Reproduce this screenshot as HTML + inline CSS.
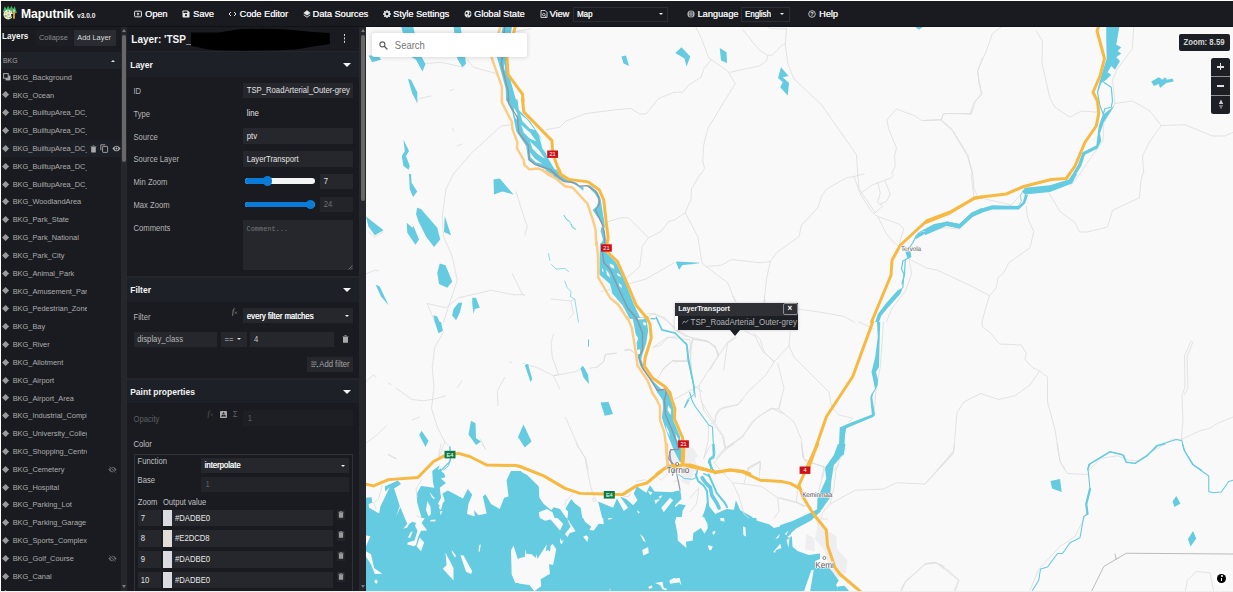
<!DOCTYPE html>
<html><head><meta charset="utf-8"><title>Maputnik</title>
<style>
*{box-sizing:border-box;margin:0;padding:0}
html,body{width:1233px;height:592px;overflow:hidden;background:#fff;font-family:"Liberation Sans",sans-serif;color:#e8e8e8}
#app{position:absolute;left:1px;top:1px;width:1232px;height:590px;background:#191b20;overflow:hidden}
.abs{position:absolute;white-space:nowrap}
/* toolbar */
#tb{position:absolute;left:0;top:0;width:1232px;height:25.8px;background:#191b20;z-index:5;border-bottom:1px solid #111216}
#tb .t{transform:scaleY(1.04);position:absolute;top:8px;font-size:9.2px;color:#ececec;text-shadow:0.25px 0 0 #ececec;line-height:11px;white-space:nowrap}
/* layer list */
#ll{position:absolute;left:0;top:25px;width:121px;height:565px;background:#191b20;overflow:hidden}
.li{transform:scaleY(1.09);position:absolute;left:11.7px;font-size:7.4px;color:#adadad;line-height:10px;white-space:nowrap;width:74.5px;overflow:hidden;margin-top:0.5px}
.dm{position:absolute;left:2px;width:6px;height:6px;background:#9a9a9a;transform:rotate(45deg)}
/* editor */
#ed{position:absolute;left:126px;top:25px;width:232.1px;height:565px;background:#191b20;overflow:hidden}
.sh{position:absolute;left:0;width:234px;height:24px;background:#1c1f24}
.sh b{position:absolute;left:5px;top:6px;font-size:9.3px;line-height:12px;color:#f0f0f0}
.sh i{position:absolute;right:10px;top:10px;width:0;height:0;border-left:4px solid transparent;border-right:4px solid transparent;border-top:5px solid #f0f0f0}
.lb{transform:scaleY(1.09);position:absolute;left:8px;font-size:8px;color:#a4a4a4;line-height:10px;white-space:nowrap}
.in{position:absolute;background:#26282e;font-size:7.9px;color:#e0e0e0;line-height:10px;white-space:nowrap;padding-left:4px}
#map{position:absolute;left:364.8px;top:25px;width:867px;height:566px;background:#faf9f9;overflow:hidden}
</style></head><body>
<div style="position:absolute;left:0;top:591px;width:1233px;height:1px;background:#efefef"></div>
<div id="app">
<div id="tb">
<svg class="abs" style="left:1px;top:3px" width="15.5" height="16.5" viewBox="0 0 14 15">
<path d="M0.5 8 L2.5 2 L4 4.5 L5.5 1.5 L7 4.5 L8.5 1.5 L10 4.5 L11.5 2 L13.5 8 L11 9 L8 6 L3 6.5 Z" fill="#3fb25f"/>
<ellipse cx="5.6" cy="9.6" rx="4.3" ry="4.4" fill="#f4f4ee"/>
<circle cx="3.3" cy="8.2" r="1" fill="#f2c94c"/><circle cx="5.6" cy="6.6" r="1" fill="#5cc46f"/><circle cx="7.9" cy="7.6" r="0.9" fill="#f2c94c"/>
<circle cx="3.3" cy="10.8" r="1" fill="#5cc46f"/><circle cx="5.2" cy="12.4" r="1" fill="#f2c94c"/><circle cx="7.3" cy="12.2" r="0.9" fill="#5cc46f"/>
<circle cx="5.8" cy="9.6" r="1.2" fill="#bdbdbd"/>
<path d="M8.2 9.2 L11 9.2 L11 11.5 L8.5 11.5 Z" fill="#191b20"/>
<rect x="10" y="7.2" width="1.7" height="6.2" fill="#d9a520"/><rect x="10" y="5" width="1.7" height="2.2" fill="#c9c9c9"/>
</svg>
<div class="abs" style="left:20px;top:4px;font-size:12.2px;font-weight:bold;color:#fff;line-height:18px;letter-spacing:-0.1px;transform:scaleY(1.09)">Maputnik</div>
<div class="abs" style="left:76px;top:10px;font-size:6.6px;font-weight:bold;color:#f0f0f0;line-height:10px;transform:scaleY(1.09)">v3.0.0</div>

<svg class="abs" style="left:133px;top:9.4px" width="8" height="8" viewBox="0 0 8 8"><rect x="0.6" y="1.2" width="6.8" height="5.6" rx="0.8" fill="none" stroke="#e6e6e6" stroke-width="1"/><path d="M4 2.6 L2.4 4.2 H3.5 V5.6 H4.5 V4.2 H5.6 Z" fill="#e6e6e6"/></svg>
<div class="t" style="left:144px">Open</div>
<svg class="abs" style="left:181px;top:9.4px" width="8" height="8" viewBox="0 0 8 8"><path d="M0.5 1.3 Q0.5 0.5 1.3 0.5 H5.8 L7.5 2.2 V6.7 Q7.5 7.5 6.7 7.5 H1.3 Q0.5 7.5 0.5 6.7 Z" fill="#e6e6e6"/><rect x="1.5" y="1.4" width="3.8" height="1.6" fill="#191b20"/><circle cx="4" cy="5.2" r="1.1" fill="#191b20"/></svg>
<div class="t" style="left:192px">Save</div>
<svg class="abs" style="left:227px;top:9.4px" width="9" height="8" viewBox="0 0 9 8"><path d="M3 2 L1 4 L3 6 M6 2 L8 4 L6 6" fill="none" stroke="#e6e6e6" stroke-width="1"/></svg>
<div class="t" style="left:238.5px">Code Editor</div>
<svg class="abs" style="left:302px;top:9.4px" width="8" height="8" viewBox="0 0 8 8"><path d="M4 0.3 L7.6 2.9 L4 5.5 L0.4 2.9 Z" fill="#e6e6e6"/><path d="M1 4.6 L4 6.8 L7 4.6 L7.6 5.1 L4 7.8 L0.4 5.1 Z" fill="#e6e6e6"/></svg>
<div class="t" style="left:311.5px">Data Sources</div>
<svg class="abs" style="left:382px;top:9.4px" width="8" height="8" viewBox="0 0 8 8"><circle cx="4" cy="4" r="2.2" fill="none" stroke="#e6e6e6" stroke-width="1.7"/><path d="M4 0 V8 M0 4 H8 M1.2 1.2 L6.8 6.8 M6.8 1.2 L1.2 6.8" stroke="#e6e6e6" stroke-width="1.3" stroke-dasharray="1.4 5.2 1.4 0"/><circle cx="4" cy="4" r="1.2" fill="#191b20"/></svg>
<div class="t" style="left:392px">Style Settings</div>
<svg class="abs" style="left:463px;top:9.4px" width="8" height="8" viewBox="0 0 8 8"><circle cx="4" cy="4" r="3.4" fill="#e6e6e6"/><path d="M2 2 L3.4 2.4 L3.8 3.6 L2.8 4.6 L1.6 4 Z M5 1.6 L6.6 3 L6.2 5 L5 5.6 L4.6 4.4 L5.4 3.2 Z M3 5.6 L4 6 L3.6 7 Z" fill="#191b20"/></svg>
<div class="t" style="left:473px">Global State</div>
<svg class="abs" style="left:539px;top:9.4px" width="8" height="8" viewBox="0 0 8 8"><path d="M1 0.4 H5 L7 2.4 V7.6 H1 Z" fill="none" stroke="#e6e6e6" stroke-width="0.9"/><circle cx="3.8" cy="4.6" r="1.3" fill="none" stroke="#e6e6e6" stroke-width="0.8"/><path d="M4.7 5.5 L6 6.8" stroke="#e6e6e6" stroke-width="0.8"/></svg>
<div class="t" style="left:548.5px">View</div>
<div class="abs" style="left:572px;top:5.5px;width:95px;height:15px;border:1px solid #2c2e34;background:#191b20"></div>
<div class="abs" style="left:576px;top:8.5px;font-size:7.9px;color:#f0f0f0;line-height:10px;text-shadow:0.3px 0 0 #f0f0f0;transform:scaleY(1.09)">Map</div>
<div class="abs" style="left:658px;top:12px;border-left:2.2px solid transparent;border-right:2.2px solid transparent;border-top:2.6px solid #f0f0f0"></div>
<svg class="abs" style="left:686px;top:9.4px" width="8" height="8" viewBox="0 0 8 8"><circle cx="4" cy="4" r="3.5" fill="#e6e6e6"/><path d="M0.5 4 H7.5 M4 0.5 V7.5 M1.3 2.2 H6.7 M1.3 5.8 H6.7" stroke="#191b20" stroke-width="0.5"/><ellipse cx="4" cy="4" rx="1.7" ry="3.4" fill="none" stroke="#191b20" stroke-width="0.5"/></svg>
<div class="t" style="left:696.5px">Language</div>
<div class="abs" style="left:739.5px;top:5.5px;width:49px;height:15px;border:1px solid #2c2e34;background:#191b20"></div>
<div class="abs" style="left:744px;top:8.5px;font-size:7.9px;color:#f0f0f0;line-height:10px;text-shadow:0.3px 0 0 #f0f0f0;transform:scaleY(1.09)">English</div>
<div class="abs" style="left:778.5px;top:12px;border-left:2.2px solid transparent;border-right:2.2px solid transparent;border-top:2.6px solid #f0f0f0"></div>
<svg class="abs" style="left:807px;top:9.4px" width="8" height="8" viewBox="0 0 8 8"><circle cx="4" cy="4" r="3.3" fill="none" stroke="#e6e6e6" stroke-width="0.8"/><text x="4" y="6" font-size="5.5" font-family="Liberation Sans" text-anchor="middle" fill="#e6e6e6" font-weight="bold">?</text></svg>
<div class="t" style="left:818px">Help</div>
</div>
<div id="ll"><div class="abs" style="left:1px;top:6px;font-size:8.2px;font-weight:bold;color:#f4f4f4;line-height:10px;transform:scaleY(1.09)">Layers</div>
<div class="abs" style="left:35px;top:4px;width:37px;height:15.5px;background:#1c1e23"></div><div class="abs" style="left:38px;top:7px;font-size:7.4px;color:#8a8b8e;line-height:10px;transform:scaleY(1.09)">Collapse</div>
<div class="abs" style="left:73px;top:4px;width:42px;height:15.5px;background:#2a2c31"></div><div class="abs" style="left:76.3px;top:7px;font-size:7.4px;color:#dcdcdc;line-height:10px;transform:scaleY(1.09)">Add Layer</div>
<div class="abs" style="left:0;top:26px;width:121px;height:17px;background:#1f2229"></div><div class="abs" style="left:2px;top:29.5px;font-size:6.9px;color:#a4a4a4;line-height:10px;transform:scaleY(1.09)">BKG</div>
<div class="abs" style="left:109.5px;top:33.5px;border-left:2px solid transparent;border-right:2px solid transparent;border-bottom:2.4px solid #e0e0e0"></div>
<div class="abs" style="left:0;top:114px;width:121px;height:17px;background:#1e2027"></div>
<svg class="abs" style="left:1.5px;top:47.4px" width="8" height="8" viewBox="0 0 8 8"><rect x="2.6" y="2.6" width="4.8" height="4.8" fill="#a9a9a9"/><rect x="0.6" y="0.6" width="4.6" height="4.6" fill="#191b20" stroke="#a9a9a9" stroke-width="1"/></svg>
<div class="li" style="top:46.2px">BKG_Background</div>
<div class="dm" style="top:66.4px;left:2.3px;width:5.2px;height:5.2px"></div>
<div class="li" style="top:64.0px">BKG_Ocean</div>
<div class="dm" style="top:84.2px;left:2.3px;width:5.2px;height:5.2px"></div>
<div class="li" style="top:81.8px">BKG_BuiltupArea_DC_1</div>
<div class="dm" style="top:102.1px;left:2.3px;width:5.2px;height:5.2px"></div>
<div class="li" style="top:99.7px">BKG_BuiltupArea_DC_2</div>
<div class="dm" style="top:119.9px;left:2.3px;width:5.2px;height:5.2px"></div>
<div class="li" style="top:117.5px">BKG_BuiltupArea_DC_3</div>
<div class="dm" style="top:137.7px;left:2.3px;width:5.2px;height:5.2px"></div>
<div class="li" style="top:135.3px">BKG_BuiltupArea_DC_4</div>
<div class="dm" style="top:155.5px;left:2.3px;width:5.2px;height:5.2px"></div>
<div class="li" style="top:153.1px">BKG_BuiltupArea_DC_5</div>
<div class="dm" style="top:173.3px;left:2.3px;width:5.2px;height:5.2px"></div>
<div class="li" style="top:170.9px">BKG_WoodlandArea</div>
<div class="dm" style="top:191.2px;left:2.3px;width:5.2px;height:5.2px"></div>
<div class="li" style="top:188.8px">BKG_Park_State</div>
<div class="dm" style="top:209.0px;left:2.3px;width:5.2px;height:5.2px"></div>
<div class="li" style="top:206.6px">BKG_Park_National</div>
<div class="dm" style="top:226.8px;left:2.3px;width:5.2px;height:5.2px"></div>
<div class="li" style="top:224.4px">BKG_Park_City</div>
<div class="dm" style="top:244.6px;left:2.3px;width:5.2px;height:5.2px"></div>
<div class="li" style="top:242.2px">BKG_Animal_Park</div>
<div class="dm" style="top:262.4px;left:2.3px;width:5.2px;height:5.2px"></div>
<div class="li" style="top:260.0px">BKG_Amusement_Park</div>
<div class="dm" style="top:280.3px;left:2.3px;width:5.2px;height:5.2px"></div>
<div class="li" style="top:277.9px">BKG_Pedestrian_Zone</div>
<div class="dm" style="top:298.1px;left:2.3px;width:5.2px;height:5.2px"></div>
<div class="li" style="top:295.7px">BKG_Bay</div>
<div class="dm" style="top:315.9px;left:2.3px;width:5.2px;height:5.2px"></div>
<div class="li" style="top:313.5px">BKG_River</div>
<div class="dm" style="top:333.7px;left:2.3px;width:5.2px;height:5.2px"></div>
<div class="li" style="top:331.3px">BKG_Allotment</div>
<div class="dm" style="top:351.5px;left:2.3px;width:5.2px;height:5.2px"></div>
<div class="li" style="top:349.1px">BKG_Airport</div>
<div class="dm" style="top:369.4px;left:2.3px;width:5.2px;height:5.2px"></div>
<div class="li" style="top:367.0px">BKG_Airport_Area</div>
<div class="dm" style="top:387.2px;left:2.3px;width:5.2px;height:5.2px"></div>
<div class="li" style="top:384.8px">BKG_Industrial_Complex</div>
<div class="dm" style="top:405.0px;left:2.3px;width:5.2px;height:5.2px"></div>
<div class="li" style="top:402.6px">BKG_University_College</div>
<div class="dm" style="top:422.8px;left:2.3px;width:5.2px;height:5.2px"></div>
<div class="li" style="top:420.4px">BKG_Shopping_Centre</div>
<div class="dm" style="top:440.6px;left:2.3px;width:5.2px;height:5.2px"></div>
<div class="li" style="top:438.2px">BKG_Cemetery</div>
<div class="dm" style="top:458.5px;left:2.3px;width:5.2px;height:5.2px"></div>
<div class="li" style="top:456.1px">BKG_Hospital</div>
<div class="dm" style="top:476.3px;left:2.3px;width:5.2px;height:5.2px"></div>
<div class="li" style="top:473.9px">BKG_Parking_Lot</div>
<div class="dm" style="top:494.1px;left:2.3px;width:5.2px;height:5.2px"></div>
<div class="li" style="top:491.7px">BKG_Parking_Garage</div>
<div class="dm" style="top:511.9px;left:2.3px;width:5.2px;height:5.2px"></div>
<div class="li" style="top:509.5px">BKG_Sports_Complex</div>
<div class="dm" style="top:529.7px;left:2.3px;width:5.2px;height:5.2px"></div>
<div class="li" style="top:527.3px">BKG_Golf_Course</div>
<div class="dm" style="top:547.6px;left:2.3px;width:5.2px;height:5.2px"></div>
<div class="li" style="top:545.2px">BKG_Canal</div>
<div class="dm" style="top:565.4px;left:2.3px;width:5.2px;height:5.2px"></div>
<div class="li" style="top:563.0px">BKG_Canal_2</div>
<svg class="abs" style="left:88.5px;top:118.7px" width="7" height="8" viewBox="0 0 7 8"><path d="M1.2 2 H5.8 V7 Q5.8 7.6 5.2 7.6 H1.8 Q1.2 7.6 1.2 7 Z M0.6 0.9 H2.4 L2.8 0.4 H4.2 L4.6 0.9 H6.4 V1.6 H0.6 Z" fill="#a9a9a9"/></svg>
<svg class="abs" style="left:98.5px;top:118.2px" width="9" height="9" viewBox="0 0 9 9"><path d="M0.8 6.2 V0.8 H5.2" fill="none" stroke="#a9a9a9" stroke-width="0.9"/><rect x="2.6" y="2.4" width="5" height="6" rx="0.6" fill="none" stroke="#a9a9a9" stroke-width="0.9"/></svg>
<svg class="abs" style="left:110.5px;top:119.2px" width="9" height="7" viewBox="0 0 9 7"><path d="M0.4 3.5 Q4.5 -2.2 8.6 3.5 Q4.5 9.2 0.4 3.5 Z" fill="#b4b4b4"/><circle cx="4.5" cy="3.5" r="1.9" fill="#1e2027"/><circle cx="4.5" cy="3.5" r="1" fill="#b4b4b4"/></svg>
<svg class="abs" style="left:106.5px;top:439.9px" width="9" height="7" viewBox="0 0 9 7"><path d="M0.4 3.5 Q4.5 -2.2 8.6 3.5 Q4.5 9.2 0.4 3.5 Z" fill="#6e6f73"/><circle cx="4.5" cy="3.5" r="1.9" fill="#191b20"/><circle cx="4.5" cy="3.5" r="1" fill="#6e6f73"/><path d="M1 0 L8 7" stroke="#191b20" stroke-width="1.6"/><path d="M1.3 0.3 L7.7 6.7" stroke="#6e6f73" stroke-width="0.7"/></svg>
<svg class="abs" style="left:106.5px;top:529.0px" width="9" height="7" viewBox="0 0 9 7"><path d="M0.4 3.5 Q4.5 -2.2 8.6 3.5 Q4.5 9.2 0.4 3.5 Z" fill="#6e6f73"/><circle cx="4.5" cy="3.5" r="1.9" fill="#191b20"/><circle cx="4.5" cy="3.5" r="1" fill="#6e6f73"/><path d="M1 0 L8 7" stroke="#191b20" stroke-width="1.6"/><path d="M1.3 0.3 L7.7 6.7" stroke="#6e6f73" stroke-width="0.7"/></svg></div>
<div class="abs" style="left:120px;top:25px;width:6.8px;height:565px;background:#25272c"></div>
<div class="abs" style="left:121px;top:33.8px;width:4px;height:127.5px;background:#686868;border-radius:2px"></div>
<div class="abs" style="left:121px;top:28px;border-left:2px solid transparent;border-right:2px solid transparent;border-bottom:3px solid #7a7a7a"></div>
<div class="abs" style="left:121px;top:584px;border-left:2px solid transparent;border-right:2px solid transparent;border-top:3px solid #7a7a7a"></div>
<div id="ed"><div class="abs" style="left:4.3px;top:7.0px;font-size:10px;font-weight:bold;color:#f4f4f4;line-height:13px;transform:scaleY(1.09)">Layer: 'TSP_</div>
<svg class="abs" style="left:59.0px;top:1.0px" width="148" height="26" viewBox="186 27 148 26"><path d="M191 32.4 L219 32.4 Q228 31 238.4 29.2 Q258 28.6 277.4 29 Q296 30 310 31.8 L329.6 33 L330 44 Q322 45.4 316 46 Q306 48 297 49.3 Q276 50.8 254 50.6 Q232 50.8 212.5 50 Q205 49 199.5 47.4 L191 46 Z" fill="#000"/></svg>
<div class="abs" style="left:216.6px;top:8.3px;width:1.8px;height:1.8px;background:#d8d8d8;box-shadow:0 3.4px 0 #d8d8d8,0 6.8px 0 #d8d8d8"></div>
<div class="abs" style="left:0;top:25.0px;width:234px;height:1px;background:#24262c"></div>
<div class="abs" style="left:0;top:26.4px;width:234px;height:24.3px;background:#1e2027"></div>
<div class="abs" style="left:3.2px;top:32.5px;font-size:8.5px;font-weight:bold;color:#f4f4f4;line-height:12px;transform:scaleY(1.09)">Layer</div>
<div class="abs" style="left:216.0px;top:36.5px;border-left:4px solid transparent;border-right:4px solid transparent;border-top:4.2px solid #f4f4f4"></div>
<div class="lb" style="left:6.5px;top:61.0px;color:#b6b6b6;font-size:7.65px">ID</div>
<div class="abs" style="left:116.3px;top:57.2px;width:109.6px;height:14.8px;background:#25272c"></div>
<div class="abs" style="left:119.8px;top:60.3px;font-size:7.7px;color:#e4e4e4;line-height:10px;;transform:scaleY(1.09)">TSP_RoadArterial_Outer-grey</div>
<div class="lb" style="left:6.5px;top:83.5px;color:#b6b6b6;font-size:7.65px">Type</div>
<div class="abs" style="left:119.8px;top:83.2px;font-size:7.7px;color:#e4e4e4;line-height:10px;transform:scaleY(1.09)">line</div>
<div class="lb" style="left:6.5px;top:106.5px;color:#b6b6b6;font-size:7.65px">Source</div>
<div class="abs" style="left:116.3px;top:102.0px;width:109.6px;height:15.5px;background:#25272c"></div>
<div class="abs" style="left:119.8px;top:105.5px;font-size:7.7px;color:#e4e4e4;line-height:10px;;transform:scaleY(1.09)">ptv</div>
<div class="lb" style="left:6.5px;top:128.7px;color:#b6b6b6;font-size:7.65px">Source Layer</div>
<div class="abs" style="left:116.3px;top:125.3px;width:109.6px;height:15.3px;background:#25272c"></div>
<div class="abs" style="left:119.8px;top:128.6px;font-size:7.7px;color:#e4e4e4;line-height:10px;;transform:scaleY(1.09)">LayerTransport</div>
<div class="lb" style="left:6.5px;top:151.7px;color:#b6b6b6;font-size:7.65px">Min Zoom</div>
<div class="abs" style="left:118.4px;top:152.2px;width:70px;height:5.6px;border-radius:3px;background:#f4f4f4"></div>
<div class="abs" style="left:118.4px;top:152.2px;width:22.1px;height:5.6px;border-radius:3px;background:#0b7bd8"></div>
<div class="abs" style="left:135.9px;top:150.4px;width:9.2px;height:9.2px;border-radius:5px;background:#0b7bd8"></div>
<div class="abs" style="left:193.2px;top:147.8px;width:32.7px;height:14.8px;background:#25272c"></div>
<div class="abs" style="left:196.7px;top:150.9px;font-size:7.7px;color:#e4e4e4;line-height:10px;;transform:scaleY(1.09)">7</div>
<div class="lb" style="left:6.5px;top:174.9px;color:#b6b6b6;font-size:7.65px">Max Zoom</div>
<div class="abs" style="left:118.4px;top:175.5px;width:70px;height:5.6px;border-radius:3px;background:#f4f4f4"></div>
<div class="abs" style="left:118.4px;top:175.5px;width:65.3px;height:5.6px;border-radius:3px;background:#0b7bd8"></div>
<div class="abs" style="left:179.1px;top:173.7px;width:9.2px;height:9.2px;border-radius:5px;background:#0b7bd8"></div>
<div class="abs" style="left:193.2px;top:170.7px;width:32.7px;height:15.0px;background:#222429"></div>
<div class="abs" style="left:196.7px;top:173.9px;font-size:7.7px;color:#6f7074;line-height:10px;;transform:scaleY(1.09)">24</div>
<div class="lb" style="left:6.5px;top:198.3px;color:#b6b6b6;font-size:7.65px">Comments</div>
<div class="abs" style="left:116.3px;top:193.7px;width:109.6px;height:50.5px;background:#25272c"></div>
<div class="abs" style="left:119.6px;top:198.3px;font-size:6.9px;color:#77787c;line-height:10px;font-family:'Liberation Mono',monospace">Comment...</div>
<svg class="abs" style="left:220.5px;top:238.8px" width="5" height="5" viewBox="0 0 5 5"><path d="M0.5 4.5 L4.5 0.5 M2.8 4.5 L4.5 2.8" stroke="#9a9a9a" stroke-width="0.6"/></svg>
<div class="abs" style="left:0;top:250.0px;width:234px;height:1.6px;background:#24262c"></div>
<div class="abs" style="left:0;top:252.0px;width:234px;height:24.0px;background:#1e2027"></div>
<div class="abs" style="left:3.2px;top:258.0px;font-size:8.5px;font-weight:bold;color:#f4f4f4;line-height:12px;transform:scaleY(1.09)">Filter</div>
<div class="abs" style="left:216.0px;top:262.0px;border-left:4px solid transparent;border-right:4px solid transparent;border-top:4.2px solid #f4f4f4"></div>
<div class="lb" style="left:6.5px;top:287.0px;color:#b6b6b6;font-size:7.65px">Filter</div>
<div class="abs" style="left:105.0px;top:281.0px;font-size:7.5px;color:#a4a4a4;line-height:10px;font-family:'Liberation Serif',serif;font-style:italic;transform:scaleY(1.09)">f<span style="font-size:6.5px;font-style:normal;position:relative;top:1px">×</span></div>
<div class="abs" style="left:116.3px;top:282.2px;width:109.6px;height:15.2px;background:#25272c"></div>
<div class="abs" style="left:119.8px;top:285.5px;font-size:7.7px;color:#f4f4f4;line-height:10px;text-shadow:0.3px 0 0 #f4f4f4;transform:scaleY(1.09)">every filter matches</div>
<div class="abs" style="left:217.6px;top:288.8px;border-left:2.2px solid transparent;border-right:2.2px solid transparent;border-top:2.6px solid #f0f0f0"></div>
<div class="abs" style="left:6.8px;top:305.5px;width:83.2px;height:15.2px;background:#25272c"></div>
<div class="abs" style="left:10.3px;top:308.8px;font-size:7.7px;color:#b8b8b8;line-height:10px;;transform:scaleY(1.09)">display_class</div>
<div class="abs" style="left:94.0px;top:305.5px;width:25.8px;height:15.2px;background:#25272c"></div>
<div class="abs" style="left:97.5px;top:308.8px;font-size:7.7px;color:#c8c8c8;line-height:10px;;transform:scaleY(1.09)">==</div>
<div class="abs" style="left:110.3px;top:312.2px;border-left:2.2px solid transparent;border-right:2.2px solid transparent;border-top:2.6px solid #e0e0e0"></div>
<div class="abs" style="left:123.4px;top:305.5px;width:83.6px;height:15.2px;background:#25272c"></div>
<div class="abs" style="left:126.9px;top:308.8px;font-size:7.7px;color:#c8c8c8;line-height:10px;;transform:scaleY(1.09)">4</div>
<svg class="abs" style="left:214.8px;top:309.2px" width="7" height="8" viewBox="0 0 7 8"><path d="M1 2.1 H6 V7.2 Q6 7.8 5.4 7.8 H1.6 Q1 7.8 1 7.2 Z M0.4 0.9 H2.3 L2.7 0.3 H4.3 L4.7 0.9 H6.6 V1.6 H0.4 Z" fill="#a9a9a9"/></svg>
<div class="abs" style="left:180.2px;top:330.9px;width:45.7px;height:15.1px;background:#25272c"></div>
<svg class="abs" style="left:184.2px;top:335.3px" width="8" height="7" viewBox="0 0 8 7"><path d="M0.3 1 H5.6 M0.3 3.2 H5.6 M0.3 5.4 H4 " stroke="#a4a4a4" stroke-width="0.8"/><path d="M5.2 5 L6.4 6.4 L7.6 5 Z" fill="#a4a4a4"/></svg>
<div class="abs" style="left:192.3px;top:334.2px;font-size:7.7px;color:#a4a4a4;line-height:10px;transform:scaleY(1.09)">Add filter</div>
<div class="abs" style="left:0;top:352.0px;width:234px;height:1.6px;background:#24262c"></div>
<div class="abs" style="left:0;top:354.2px;width:234px;height:23.3px;background:#1e2027"></div>
<div class="abs" style="left:3.2px;top:359.9px;font-size:8.5px;font-weight:bold;color:#f4f4f4;line-height:12px;transform:scaleY(1.09)">Paint properties</div>
<div class="abs" style="left:216.0px;top:363.9px;border-left:4px solid transparent;border-right:4px solid transparent;border-top:4.2px solid #f4f4f4"></div>
<div class="lb" style="left:6.5px;top:388.7px;color:#5e5f63;font-size:7.65px">Opacity</div>
<div class="abs" style="left:116.3px;top:384.4px;width:109.6px;height:15.2px;background:#1d1f24"></div>
<div class="abs" style="left:120.8px;top:387.7px;font-size:7.7px;color:#5e5f63;line-height:10px;;transform:scaleY(1.09)">1</div>
<div class="abs" style="left:80.6px;top:383.0px;font-size:7.5px;color:#5e5f63;line-height:10px;font-family:'Liberation Serif',serif;font-style:italic;transform:scaleY(1.09)">f<span style="font-size:6.5px;font-style:normal;position:relative;top:1px">×</span></div>
<svg class="abs" style="left:93.0px;top:385.4px" width="7" height="7" viewBox="0 0 7 7"><rect x="0" y="0" width="7" height="7" rx="0.8" fill="#a8a8a8"/><path d="M0.8 5.6 L2.6 3.4 L3.8 4.6 L4.8 3.6 L6.2 5.6 Z" fill="#191b20"/><path d="M3.5 1 V3.2 M2.5 2.3 L3.5 3.3 L4.5 2.3" stroke="#191b20" stroke-width="0.7" fill="none"/></svg>
<div class="abs" style="left:105.8px;top:383.7px;font-size:8px;color:#5e5f63;line-height:10px;transform:scaleY(1.09)">Σ</div>
<div class="lb" style="left:6.5px;top:413.6px;color:#c0c0c0;font-size:7.65px">Color</div>
<div class="abs" style="left:7.0px;top:428.2px;width:219.3px;height:160px;border:1px solid #303237"></div>
<div class="lb" style="left:10.6px;top:431.2px;color:#c0c0c0;font-size:7.65px">Function</div>
<div class="abs" style="left:74.1px;top:432.0px;width:148.1px;height:15.3px;background:#25272c"></div>
<div class="abs" style="left:77.6px;top:435.3px;font-size:7.7px;color:#f4f4f4;line-height:10px;text-shadow:0.3px 0 0 #f4f4f4;transform:scaleY(1.09)">interpolate</div>
<div class="abs" style="left:213.5px;top:438.8px;border-left:2.2px solid transparent;border-right:2.2px solid transparent;border-top:2.6px solid #f0f0f0"></div>
<div class="lb" style="left:10.6px;top:450.0px;color:#c0c0c0;font-size:7.65px">Base</div>
<div class="abs" style="left:74.1px;top:450.8px;width:148.1px;height:15.2px;background:#222429"></div>
<div class="abs" style="left:78.6px;top:454.1px;font-size:7.7px;color:#5e5f63;line-height:10px;;transform:scaleY(1.09)">1</div>
<div class="lb" style="left:10.8px;top:471.7px;color:#c0c0c0;font-size:7.65px">Zoom</div>
<div class="lb" style="left:35.9px;top:471.7px;color:#c0c0c0;font-size:7.65px">Output value</div>
<div class="abs" style="left:11.0px;top:483.8px;width:22.8px;height:16.5px;background:#25272c"></div>
<div class="abs" style="left:13.8px;top:487.7px;font-size:7.7px;color:#e0e0e0;line-height:10px;;transform:scaleY(1.09)">7</div>
<div class="abs" style="left:35.7px;top:483.8px;width:170.3px;height:16.5px;background:#25272c"></div>
<div class="abs" style="left:48.0px;top:487.7px;font-size:7.7px;color:#e8e8e8;line-height:10px;;transform:scaleY(1.09)">#DADBE0</div>
<div class="abs" style="left:35.7px;top:483.8px;width:9.4px;height:16.5px;background:#dadbe0"></div>
<div class="abs" style="left:210.0px;top:484.0px;width:7.6px;height:10.2px;background:#222429"></div>
<svg class="abs" style="left:211.0px;top:484.8px" width="6" height="7" viewBox="0 0 7 8"><path d="M1 2.1 H6 V7.2 Q6 7.8 5.4 7.8 H1.6 Q1 7.8 1 7.2 Z M0.4 0.9 H2.3 L2.7 0.3 H4.3 L4.7 0.9 H6.6 V1.6 H0.4 Z" fill="#9a9a9a"/></svg>
<div class="abs" style="left:11.0px;top:504.4px;width:22.8px;height:16.5px;background:#25272c"></div>
<div class="abs" style="left:13.8px;top:508.3px;font-size:7.7px;color:#e0e0e0;line-height:10px;;transform:scaleY(1.09)">8</div>
<div class="abs" style="left:35.7px;top:504.4px;width:170.3px;height:16.5px;background:#25272c"></div>
<div class="abs" style="left:48.0px;top:508.3px;font-size:7.7px;color:#e8e8e8;line-height:10px;;transform:scaleY(1.09)">#E2DCD8</div>
<div class="abs" style="left:35.7px;top:504.4px;width:9.4px;height:16.5px;background:#e2dcd8"></div>
<div class="abs" style="left:210.0px;top:504.6px;width:7.6px;height:10.2px;background:#222429"></div>
<svg class="abs" style="left:211.0px;top:505.4px" width="6" height="7" viewBox="0 0 7 8"><path d="M1 2.1 H6 V7.2 Q6 7.8 5.4 7.8 H1.6 Q1 7.8 1 7.2 Z M0.4 0.9 H2.3 L2.7 0.3 H4.3 L4.7 0.9 H6.6 V1.6 H0.4 Z" fill="#9a9a9a"/></svg>
<div class="abs" style="left:11.0px;top:525.0px;width:22.8px;height:16.5px;background:#25272c"></div>
<div class="abs" style="left:13.8px;top:528.9px;font-size:7.7px;color:#e0e0e0;line-height:10px;;transform:scaleY(1.09)">9</div>
<div class="abs" style="left:35.7px;top:525.0px;width:170.3px;height:16.5px;background:#25272c"></div>
<div class="abs" style="left:48.0px;top:528.9px;font-size:7.7px;color:#e8e8e8;line-height:10px;;transform:scaleY(1.09)">#DADBE0</div>
<div class="abs" style="left:35.7px;top:525.0px;width:9.4px;height:16.5px;background:#dadbe0"></div>
<div class="abs" style="left:210.0px;top:525.2px;width:7.6px;height:10.2px;background:#222429"></div>
<svg class="abs" style="left:211.0px;top:526.0px" width="6" height="7" viewBox="0 0 7 8"><path d="M1 2.1 H6 V7.2 Q6 7.8 5.4 7.8 H1.6 Q1 7.8 1 7.2 Z M0.4 0.9 H2.3 L2.7 0.3 H4.3 L4.7 0.9 H6.6 V1.6 H0.4 Z" fill="#9a9a9a"/></svg>
<div class="abs" style="left:11.0px;top:545.6px;width:22.8px;height:16.5px;background:#25272c"></div>
<div class="abs" style="left:13.8px;top:549.6px;font-size:7.7px;color:#e0e0e0;line-height:10px;;transform:scaleY(1.09)">10</div>
<div class="abs" style="left:35.7px;top:545.6px;width:170.3px;height:16.5px;background:#25272c"></div>
<div class="abs" style="left:48.0px;top:549.6px;font-size:7.7px;color:#e8e8e8;line-height:10px;;transform:scaleY(1.09)">#DADBE0</div>
<div class="abs" style="left:35.7px;top:545.6px;width:9.4px;height:16.5px;background:#dadbe0"></div>
<div class="abs" style="left:210.0px;top:545.8px;width:7.6px;height:10.2px;background:#222429"></div>
<svg class="abs" style="left:211.0px;top:546.6px" width="6" height="7" viewBox="0 0 7 8"><path d="M1 2.1 H6 V7.2 Q6 7.8 5.4 7.8 H1.6 Q1 7.8 1 7.2 Z M0.4 0.9 H2.3 L2.7 0.3 H4.3 L4.7 0.9 H6.6 V1.6 H0.4 Z" fill="#9a9a9a"/></svg></div>
<div class="abs" style="left:358.1px;top:25px;width:6.7px;height:565px;background:#25272c"></div>
<div class="abs" style="left:359.8px;top:34px;width:4.1px;height:166px;background:#686868;border-radius:2px"></div>
<div class="abs" style="left:359.8px;top:28px;border-left:2.05px solid transparent;border-right:2.05px solid transparent;border-bottom:3px solid #7a7a7a"></div>
<div class="abs" style="left:359.8px;top:584px;border-left:2.05px solid transparent;border-right:2.05px solid transparent;border-top:3px solid #7a7a7a"></div>
<div id="map"><svg width="867" height="566" viewBox="366 26 867 566" style="position:absolute;left:0;top:0" font-family="Liberation Sans, sans-serif"><g transform="translate(366,444) scale(0.125)"><polygon points="0,430 45,425 50,470 20,480 25,510 105,555 115,500 190,345 155,380 150,340 255,292 280,320 225,355 270,495 240,580 275,505 310,592 310,600 -8,600 -8,430" fill="#64cbe0"/><polygon points="445,600 445,592 430,540 410,470 405,400 440,335 545,350 535,300 530,215 590,170 575,210 598,195 605,222 625,235 635,265 598,275 640,312 590,350 600,430 575,480 590,490 582,510 600,530 615,470 630,455 612,395 655,372 775,435 815,360 850,405 820,475 808,560 870,580 865,530 900,570 965,555 935,420 955,402 1000,480 1070,520 1105,430 1140,420 1125,290 1160,215 1232,215 1240,215 1240,600" fill="#64cbe0"/><polygon points="510,385 550,435 543,442 520,415" fill="#faf9f9"/><polygon points="490,455 515,500 520,560 500,580 480,530" fill="#faf9f9"/><polygon points="590,540 612,535 598,570" fill="#faf9f9"/></g><g transform="translate(520,444) scale(0.125)"><polygon points="-8,215 0,215 60,250 150,340 155,430 190,480 250,530 270,505 320,520 375,600 -8,600" fill="#64cbe0"/><polygon points="150,545 215,520 260,545 280,600 160,600" fill="#faf9f9"/><polygon points="370,505 410,440 440,475 485,510 500,600 380,600 385,540 365,520" fill="#64cbe0"/><polygon points="625,460 745,510 775,435 830,535 865,510 800,420 850,440 905,490 940,450 910,395 935,340 1010,390 1040,330 1075,380 1232,385 1240,385 1240,600 660,600" fill="#64cbe0"/><polygon points="1020,375 1060,385 1045,410" fill="#faf9f9"/><polygon points="1110,420 1140,410 1120,440" fill="#faf9f9"/><polygon points="1075,450 1120,440 1085,480" fill="#faf9f9"/><polygon points="1130,510 1200,430 1225,450 1150,545" fill="#faf9f9"/><polygon points="935,530 960,545 945,555" fill="#faf9f9"/></g><g transform="translate(674,444) scale(0.125)"><polygon points="-8,385 0,380 50,370 60,440 0,500 -8,500" fill="#64cbe0"/><polygon points="-8,515 0,515 40,480 95,490 70,530 60,600 -8,600" fill="#64cbe0"/><polygon points="220,600 250,520 260,470 330,560 420,520 480,525 495,450 530,530 620,580 640,600" fill="#64cbe0"/><polygon points="305,0 325,0 322,100 290,125 300,160 310,200 290,200 275,130 310,95" fill="#64cbe0"/></g><rect x="366" y="518" width="484" height="80" fill="#64cbe0"/><g transform="translate(366,518) scale(0.125)"><polygon points="0,140 35,145 0,225" fill="#faf9f9"/><polygon points="0,265 40,290 65,400 130,445 70,448 40,370 0,310" fill="#faf9f9"/><polygon points="80,490 95,508 82,528 65,508" fill="#faf9f9"/><polygon points="310,0 470,0 445,40 400,40 372,30 345,48 330,75 298,85 330,45" fill="#faf9f9"/><polygon points="400,38 445,40 490,100 440,102 418,150 400,215 382,226 330,212 333,195 388,180 412,102 392,62" fill="#faf9f9"/><polygon points="430,155 465,195 440,265 405,225" fill="#faf9f9"/><polygon points="355,115 375,105 352,160 336,155" fill="#faf9f9"/><polygon points="515,15 555,12 557,25 515,27" fill="#faf9f9"/><polygon points="635,275 700,400 700,500 615,405 645,375" fill="#faf9f9"/><polygon points="685,255 720,300 712,318 690,280" fill="#faf9f9"/><polygon points="755,295 780,300 850,425 840,448 800,430" fill="#faf9f9"/><polygon points="905,215 918,212 910,270 900,265" fill="#faf9f9"/><polygon points="1180,220 1215,330 1232,320 1240,320 1240,520 1195,520 1165,450 1160,260" fill="#faf9f9"/></g><g transform="translate(520,518) scale(0.125)"><polygon points="160,0 200,22 245,12 320,100 345,45 300,0" fill="#faf9f9"/><polygon points="375,0 445,105 395,122 382,152 358,130 405,70 385,25" fill="#faf9f9"/><polygon points="505,0 665,0 670,50 630,45 590,100 555,95 570,70 520,30" fill="#faf9f9"/><polygon points="705,0 745,0 710,15" fill="#faf9f9"/><polygon points="320,160 335,185 350,170 335,210 322,200" fill="#faf9f9"/><polygon points="505,150 530,138 548,155 538,192" fill="#faf9f9"/><polygon points="-8,320 0,320 40,310 42,245 50,285 95,290 125,320 130,290 140,325 215,210 205,265 225,255 240,270 245,220 262,208 290,250 265,375 232,370 240,445 165,490 170,545 115,585 75,535 0,525 -8,525" fill="#faf9f9"/><polygon points="960,128 985,150 1008,195 985,180" fill="#faf9f9"/><polygon points="978,255 1025,232 1030,280 985,300" fill="#faf9f9"/><polygon points="1080,520 1140,510 1150,560 1175,565 1170,580 1140,570 1120,535" fill="#faf9f9"/><polygon points="1025,550 1055,540 1060,555 1035,568" fill="#faf9f9"/><polygon points="1195,500 1232,480 1240,480 1240,520 1200,525" fill="#faf9f9"/><polygon points="712,572 720,565 728,580" fill="#faf9f9"/></g><g transform="translate(674,518) scale(0.125)"><polygon points="8,28 20,-8 240,-8 268,48 270,80 245,125 215,80 155,120 150,180 95,190 100,240 30,180 28,128" fill="#faf9f9"/><polygon points="-8,485 0,485 45,478 60,540 45,515 0,520 -8,520" fill="#faf9f9"/><polygon points="370,0 400,0 405,30 372,22" fill="#faf9f9"/><polygon points="305,115 325,100 332,115 315,135" fill="#faf9f9"/><polygon points="272,218 310,225 298,258 280,255" fill="#faf9f9"/><polygon points="552,68 572,75 575,150 555,135" fill="#faf9f9"/><polygon points="660,-5 660,20 760,50 800,80 1010,25 1095,0 1095,-5" fill="#faf9f9"/><polygon points="810,165 850,125 835,160" fill="#faf9f9"/><polygon points="795,270 850,205 860,240 815,255 808,280" fill="#faf9f9"/><polygon points="885,130 915,100 900,135" fill="#faf9f9"/><polygon points="905,150 985,95 925,160" fill="#faf9f9"/><polygon points="900,175 925,160 915,235" fill="#faf9f9"/></g><polygon points="813.75,517 811.9,519.9 796.25,528.6 791,533 792,538 792.5,546.75 797.5,551 808.75,555 820,553.6 820,559 815,561 815,568 831.9,568 833.75,573.6 838.75,580.5 836,585 838,588 834,600 1300,600 1300,517" fill="#faf9f9"/><polygon points="803.75,592 811.25,570.5 813.75,569.5 810,592" fill="#faf9f9"/><polygon points="838,586.5 844.5,585.8 849.5,591.5 847.5,597 840,596.5 837,591" fill="#64cbe0"/><polygon points="838,444 845.5,444 843.75,454 833.75,465.25 831.25,481.5 830,497.75 821.25,510.25 817,511.5 817.5,497.75 826.25,479 825,467.75 833.75,455.25" fill="#64cbe0"/><polygon points="817,509.5 821.25,511 812,519.5 805,520 795,525.25 780,530.25 780,525.25 792.5,521 805,515.25" fill="#64cbe0"/><g transform="translate(630,400) scale(0.125)"><polygon points="440,380 500,380 545,450 520,470 540,560 470,600 440,600 430,500" fill="#eeeef0"/><polygon points="330,410 380,410 400,480 360,520 320,470" fill="#eeeef0"/></g><g transform="translate(674,444) scale(0.125)"><polygon points="60,20 120,20 170,90 150,150 60,150" fill="#eeeef0"/><polygon points="60,190 160,200 150,260 120,330 60,300" fill="#eeeef0"/></g><g transform="translate(780,444) scale(0.25)"><polygon points="140,290 165,300 180,340 225,370 228,420 270,465 265,510 235,540 200,500 175,420 140,380 150,330" fill="#eeeef0"/><polygon points="105,360 135,375 140,430 100,420" fill="#eeeef0"/></g><g transform="translate(366,26) scale(0.25)"><polyline points="200,310 215,290 260,280" fill="none" stroke="#dfdede" stroke-width="3.4" stroke-linejoin="round" stroke-linecap="round" /><polyline points="240,150 300,145 390,165 400,150" fill="none" stroke="#dfdede" stroke-width="3.4" stroke-linejoin="round" stroke-linecap="round" /><polyline points="400,130 430,165 520,190" fill="none" stroke="#dfdede" stroke-width="3.4" stroke-linejoin="round" stroke-linecap="round" /><polyline points="350,592 420,510 540,400 585,395" fill="none" stroke="#dfdede" stroke-width="3.4" stroke-linejoin="round" stroke-linecap="round" /><polyline points="590,25 660,10" fill="none" stroke="#dfdede" stroke-width="3.4" stroke-linejoin="round" stroke-linecap="round" /><polyline points="720,415 775,405 800,380 880,350 1000,335 1060,330 1095,352 1120,352 1170,290 1232,265" fill="none" stroke="#dfdede" stroke-width="3.4" stroke-linejoin="round" stroke-linecap="round" /><polyline points="335,258 352,253" fill="none" stroke="#dfdede" stroke-width="3.4" stroke-linejoin="round" stroke-linecap="round" /><polyline points="345,408 353,420" fill="none" stroke="#dfdede" stroke-width="3.4" stroke-linejoin="round" stroke-linecap="round" /><polyline points="365,480 385,472" fill="none" stroke="#dfdede" stroke-width="3.4" stroke-linejoin="round" stroke-linecap="round" /></g><g transform="translate(674,26) scale(0.25)"><polyline points="85,0 110,50 140,130 150,135 215,180 245,230 135,410 118,480 115,540 122,570 108,592" fill="none" stroke="#dfdede" stroke-width="3.4" stroke-linejoin="round" stroke-linecap="round" /><polyline points="150,135 120,170 108,205 60,235 35,265 0,265" fill="none" stroke="#dfdede" stroke-width="3.4" stroke-linejoin="round" stroke-linecap="round" /><polyline points="225,185 340,160 370,140 375,118 395,115 430,78 445,72 450,10" fill="none" stroke="#dfdede" stroke-width="3.4" stroke-linejoin="round" stroke-linecap="round" /><polyline points="275,15 340,95 375,118" fill="none" stroke="#dfdede" stroke-width="3.4" stroke-linejoin="round" stroke-linecap="round" /><polyline points="370,0 385,10 450,12" fill="none" stroke="#dfdede" stroke-width="3.4" stroke-linejoin="round" stroke-linecap="round" /><polyline points="445,72 455,150 480,212 590,315 730,515 735,592" fill="none" stroke="#dfdede" stroke-width="3.4" stroke-linejoin="round" stroke-linecap="round" /><polyline points="890,332 852,375 858,410 890,488 882,520 885,560 870,592" fill="none" stroke="#dfdede" stroke-width="3.4" stroke-linejoin="round" stroke-linecap="round" /><polyline points="890,332 965,360 990,378 1070,375 1075,355 1090,350 1155,350 1190,352 1205,300 1232,275" fill="none" stroke="#dfdede" stroke-width="3.4" stroke-linejoin="round" stroke-linecap="round" /><polyline points="1070,378 1110,410 1175,515 1195,592" fill="none" stroke="#dfdede" stroke-width="3.4" stroke-linejoin="round" stroke-linecap="round" /><polyline points="1232,130 1215,180 1220,230 1232,270" fill="none" stroke="#dfdede" stroke-width="3.4" stroke-linejoin="round" stroke-linecap="round" /></g><g transform="translate(925,26) scale(0.25)"><polyline points="310,0 270,30 245,100 210,180 225,270 195,310 180,352 75,350 65,375 0,378" fill="none" stroke="#dfdede" stroke-width="3.4" stroke-linejoin="round" stroke-linecap="round" /><polyline points="65,378 110,420 170,520 190,592" fill="none" stroke="#dfdede" stroke-width="3.4" stroke-linejoin="round" stroke-linecap="round" /><polyline points="445,20 470,60 468,150 500,290 520,325 580,365 625,340 690,345" fill="none" stroke="#dfdede" stroke-width="3.4" stroke-linejoin="round" stroke-linecap="round" /><polyline points="835,0 830,90 770,170 750,215 760,310 830,300 900,340 945,398 1040,395 1150,440 1200,440 1232,425" fill="none" stroke="#dfdede" stroke-width="3.4" stroke-linejoin="round" stroke-linecap="round" /><polyline points="945,398 900,460 870,520 875,592" fill="none" stroke="#dfdede" stroke-width="3.4" stroke-linejoin="round" stroke-linecap="round" /><polyline points="760,310 715,390 712,460 640,560 620,592" fill="none" stroke="#dfdede" stroke-width="3.4" stroke-linejoin="round" stroke-linecap="round" /></g><g transform="translate(366,174) scale(0.25)"><polyline points="350,0 320,60 305,170 310,250 345,330 365,425 340,500 310,592" fill="none" stroke="#dfdede" stroke-width="3.4" stroke-linejoin="round" stroke-linecap="round" /><polyline points="600,72 625,150 645,210 635,245" fill="none" stroke="#dfdede" stroke-width="3.4" stroke-linejoin="round" stroke-linecap="round" /><polyline points="585,398 625,480 635,485" fill="none" stroke="#dfdede" stroke-width="3.4" stroke-linejoin="round" stroke-linecap="round" /><polyline points="385,492 500,465 590,483 635,483" fill="none" stroke="#dfdede" stroke-width="3.4" stroke-linejoin="round" stroke-linecap="round" /><polyline points="245,518 320,535 370,495 385,492" fill="none" stroke="#dfdede" stroke-width="3.4" stroke-linejoin="round" stroke-linecap="round" /><polyline points="245,518 275,592" fill="none" stroke="#dfdede" stroke-width="3.4" stroke-linejoin="round" stroke-linecap="round" /><polyline points="740,500 820,508 835,500" fill="none" stroke="#dfdede" stroke-width="3.4" stroke-linejoin="round" stroke-linecap="round" /><polyline points="820,510 830,560 810,580" fill="none" stroke="#dfdede" stroke-width="3.4" stroke-linejoin="round" stroke-linecap="round" /><polyline points="0,400 35,385 48,387" fill="none" stroke="#dfdede" stroke-width="3.4" stroke-linejoin="round" stroke-linecap="round" /><polyline points="10,232 35,252 68,232" fill="none" stroke="#dfdede" stroke-width="3.4" stroke-linejoin="round" stroke-linecap="round" /><polyline points="970,190 1020,175 1050,175 1130,255 1180,230 1210,190 1232,185" fill="none" stroke="#dfdede" stroke-width="3.4" stroke-linejoin="round" stroke-linecap="round" /><polyline points="1130,255 1105,290 1095,370 1050,410 1040,420" fill="none" stroke="#dfdede" stroke-width="3.4" stroke-linejoin="round" stroke-linecap="round" /><polyline points="1050,440 1120,420 1232,355" fill="none" stroke="#dfdede" stroke-width="3.4" stroke-linejoin="round" stroke-linecap="round" /><polyline points="1130,570 1150,560 1195,575" fill="none" stroke="#dfdede" stroke-width="3.4" stroke-linejoin="round" stroke-linecap="round" /><polyline points="940,470 985,460" fill="none" stroke="#dfdede" stroke-width="3.4" stroke-linejoin="round" stroke-linecap="round" /></g><g transform="translate(674,174) scale(0.25)"><polyline points="105,0 70,60 68,100 45,155 0,185" fill="none" stroke="#dfdede" stroke-width="3.4" stroke-linejoin="round" stroke-linecap="round" /><polyline points="45,155 95,250 112,355 128,370 190,365 230,342 345,355 385,350" fill="none" stroke="#dfdede" stroke-width="3.4" stroke-linejoin="round" stroke-linecap="round" /><polyline points="128,370 215,435 245,510" fill="none" stroke="#dfdede" stroke-width="3.4" stroke-linejoin="round" stroke-linecap="round" /><polyline points="385,350 370,420 360,515" fill="none" stroke="#dfdede" stroke-width="3.4" stroke-linejoin="round" stroke-linecap="round" /><polyline points="385,350 410,315 500,250 510,205 575,135 590,90 610,60 690,15 720,10" fill="none" stroke="#dfdede" stroke-width="3.4" stroke-linejoin="round" stroke-linecap="round" /><polyline points="720,10 745,80 790,150 815,170 900,200 920,220 905,265 900,290" fill="none" stroke="#dfdede" stroke-width="3.4" stroke-linejoin="round" stroke-linecap="round" /><polyline points="720,10 760,0" fill="none" stroke="#dfdede" stroke-width="3.4" stroke-linejoin="round" stroke-linecap="round" /><polyline points="735,0 740,60 750,75 805,155" fill="none" stroke="#dfdede" stroke-width="3.4" stroke-linejoin="round" stroke-linecap="round" /><polyline points="750,75 790,45 870,15 880,0" fill="none" stroke="#dfdede" stroke-width="3.4" stroke-linejoin="round" stroke-linecap="round" /><polyline points="815,35 825,75 815,115 835,128 805,155" fill="none" stroke="#dfdede" stroke-width="3.4" stroke-linejoin="round" stroke-linecap="round" /><polyline points="845,30 865,80 850,110 825,120" fill="none" stroke="#dfdede" stroke-width="3.4" stroke-linejoin="round" stroke-linecap="round" /><polyline points="815,170 850,240 880,275 900,290" fill="none" stroke="#dfdede" stroke-width="3.4" stroke-linejoin="round" stroke-linecap="round" /><polyline points="1195,0 1200,60 1215,90" fill="none" stroke="#dfdede" stroke-width="3.4" stroke-linejoin="round" stroke-linecap="round" /><polyline points="940,340 1004,372" fill="none" stroke="#dfdede" stroke-width="3.4" stroke-linejoin="round" stroke-linecap="round" /><polyline points="940,340 950,400 925,470 870,540 850,592" fill="none" stroke="#dfdede" stroke-width="3.4" stroke-linejoin="round" stroke-linecap="round" /><polyline points="495,540 600,555 680,570 720,592" fill="none" stroke="#dfdede" stroke-width="3.4" stroke-linejoin="round" stroke-linecap="round" /></g><g transform="translate(925,174) scale(0.25)"><polyline points="185,0 195,90" fill="none" stroke="#dfdede" stroke-width="3.4" stroke-linejoin="round" stroke-linecap="round" /><polyline points="195,90 330,120 345,125 385,80" fill="none" stroke="#dfdede" stroke-width="3.4" stroke-linejoin="round" stroke-linecap="round" /><polyline points="405,130 410,175 435,230 420,295 335,355 315,395 292,415 285,455 258,487 240,545 228,592" fill="none" stroke="#dfdede" stroke-width="3.4" stroke-linejoin="round" stroke-linecap="round" /><polyline points="0,375 50,385 190,450 258,487" fill="none" stroke="#dfdede" stroke-width="3.4" stroke-linejoin="round" stroke-linecap="round" /><polyline points="495,75 540,150 600,195 618,232 650,232 730,212 750,145 858,95 862,40 870,0" fill="none" stroke="#dfdede" stroke-width="3.4" stroke-linejoin="round" stroke-linecap="round" /><polyline points="0,230 80,215 140,220" fill="none" stroke="#dfdede" stroke-width="3.4" stroke-linejoin="round" stroke-linecap="round" /><polyline points="580,50 620,0" fill="none" stroke="#dfdede" stroke-width="3.4" stroke-linejoin="round" stroke-linecap="round" /></g><g transform="translate(366,322) scale(0.25)"><polyline points="310,40 275,100 265,180 272,260 262,345 285,420 315,480 335,500" fill="none" stroke="#dfdede" stroke-width="3.4" stroke-linejoin="round" stroke-linecap="round" /><polyline points="120,265 185,310 230,315 275,308 318,295" fill="none" stroke="#dfdede" stroke-width="3.4" stroke-linejoin="round" stroke-linecap="round" /><polyline points="0,238 30,212 40,222" fill="none" stroke="#dfdede" stroke-width="3.4" stroke-linejoin="round" stroke-linecap="round" /><polyline points="90,245 100,250" fill="none" stroke="#dfdede" stroke-width="3.4" stroke-linejoin="round" stroke-linecap="round" /><polyline points="365,262 385,235" fill="none" stroke="#dfdede" stroke-width="3.4" stroke-linejoin="round" stroke-linecap="round" /><polyline points="0,485 45,450 82,415" fill="none" stroke="#dfdede" stroke-width="3.4" stroke-linejoin="round" stroke-linecap="round" /><polyline points="185,392 215,380" fill="none" stroke="#dfdede" stroke-width="3.4" stroke-linejoin="round" stroke-linecap="round" /><polyline points="88,530 120,548" fill="none" stroke="#dfdede" stroke-width="3.4" stroke-linejoin="round" stroke-linecap="round" /><polyline points="555,222 525,275 528,335" fill="none" stroke="#dfdede" stroke-width="3.4" stroke-linejoin="round" stroke-linecap="round" /><polyline points="575,160 582,162" fill="none" stroke="#dfdede" stroke-width="3.4" stroke-linejoin="round" stroke-linecap="round" /><polyline points="628,165 690,185 750,215 840,198 860,185" fill="none" stroke="#dfdede" stroke-width="3.4" stroke-linejoin="round" stroke-linecap="round" /><polyline points="750,50 740,85 745,140 770,210 750,215 775,268" fill="none" stroke="#dfdede" stroke-width="3.4" stroke-linejoin="round" stroke-linecap="round" /><polyline points="895,185 925,180 952,155 958,130 1000,125" fill="none" stroke="#dfdede" stroke-width="3.4" stroke-linejoin="round" stroke-linecap="round" /><polyline points="1035,112 1060,110 1080,130" fill="none" stroke="#dfdede" stroke-width="3.4" stroke-linejoin="round" stroke-linecap="round" /><polyline points="798,382 850,500 880,548 888,592" fill="none" stroke="#dfdede" stroke-width="3.4" stroke-linejoin="round" stroke-linecap="round" /><polyline points="458,470 478,508" fill="none" stroke="#dfdede" stroke-width="3.4" stroke-linejoin="round" stroke-linecap="round" /><polyline points="315,480 290,545" fill="none" stroke="#dfdede" stroke-width="3.4" stroke-linejoin="round" stroke-linecap="round" /></g><g transform="translate(630,400) scale(0.125)"><polyline points="570,0 590,80 660,180 740,290 760,390 690,470" fill="none" stroke="#dfdede" stroke-width="6.8" stroke-linejoin="round" stroke-linecap="round" /><polyline points="900,0 860,40 740,60 690,120 680,170 650,190" fill="none" stroke="#dfdede" stroke-width="6.8" stroke-linejoin="round" stroke-linecap="round" /><polyline points="1232,110 1140,70 1060,110 970,180 900,300 760,390" fill="none" stroke="#dfdede" stroke-width="6.8" stroke-linejoin="round" stroke-linecap="round" /><polyline points="630,200 625,330 590,470" fill="none" stroke="#dfdede" stroke-width="6.8" stroke-linejoin="round" stroke-linecap="round" /><polyline points="1040,490 950,540 940,592" fill="none" stroke="#dfdede" stroke-width="6.8" stroke-linejoin="round" stroke-linecap="round" /><polyline points="1190,70 1210,0" fill="none" stroke="#dfdede" stroke-width="6.8" stroke-linejoin="round" stroke-linecap="round" /></g><g transform="translate(620,296) scale(0.125)"><polyline points="215,140 280,140 380,200 440,270 520,320 700,360 760,400 790,470 720,592" fill="none" stroke="#dfdede" stroke-width="6.8" stroke-linejoin="round" stroke-linecap="round" /><polyline points="900,0 930,50" fill="none" stroke="#dfdede" stroke-width="6.8" stroke-linejoin="round" stroke-linecap="round" /><polyline points="1155,0 1160,50" fill="none" stroke="#dfdede" stroke-width="6.8" stroke-linejoin="round" stroke-linecap="round" /><polyline points="830,592 860,380 930,330" fill="none" stroke="#dfdede" stroke-width="6.8" stroke-linejoin="round" stroke-linecap="round" /><polyline points="1000,280 1080,320 1140,440 1232,520" fill="none" stroke="#dfdede" stroke-width="6.8" stroke-linejoin="round" stroke-linecap="round" /><polyline points="280,400 380,330 560,350 570,592" fill="none" stroke="#dfdede" stroke-width="6.8" stroke-linejoin="round" stroke-linecap="round" /><polyline points="340,592 420,520 540,520" fill="none" stroke="#dfdede" stroke-width="6.8" stroke-linejoin="round" stroke-linecap="round" /><polyline points="40,435 80,430 110,450" fill="none" stroke="#dfdede" stroke-width="6.8" stroke-linejoin="round" stroke-linecap="round" /></g><g transform="translate(674,322) scale(0.25)"><polyline points="0,160 50,155 75,70 130,75 165,100 178,135" fill="none" stroke="#dfdede" stroke-width="3.4" stroke-linejoin="round" stroke-linecap="round" /><polyline points="215,80 130,205 100,255 0,310" fill="none" stroke="#dfdede" stroke-width="3.4" stroke-linejoin="round" stroke-linecap="round" /><polyline points="215,80 245,60" fill="none" stroke="#dfdede" stroke-width="3.4" stroke-linejoin="round" stroke-linecap="round" /><polyline points="318,45 345,70 360,120 400,160 460,95 465,40" fill="none" stroke="#dfdede" stroke-width="3.4" stroke-linejoin="round" stroke-linecap="round" /><polyline points="400,160 365,215 300,275 255,330 178,350 165,378 165,400" fill="none" stroke="#dfdede" stroke-width="3.4" stroke-linejoin="round" stroke-linecap="round" /><polyline points="100,255 110,320 160,400 200,460 205,505 175,535" fill="none" stroke="#dfdede" stroke-width="3.4" stroke-linejoin="round" stroke-linecap="round" /><polyline points="415,165 440,265 418,348 388,345 330,385 270,460 205,505" fill="none" stroke="#dfdede" stroke-width="3.4" stroke-linejoin="round" stroke-linecap="round" /><polyline points="418,348 480,400 510,470 515,540 540,580" fill="none" stroke="#dfdede" stroke-width="3.4" stroke-linejoin="round" stroke-linecap="round" /><polyline points="460,95 480,140 620,280 630,340 660,372 715,385 700,400" fill="none" stroke="#dfdede" stroke-width="3.4" stroke-linejoin="round" stroke-linecap="round" /><polyline points="740,0 800,28" fill="none" stroke="#dfdede" stroke-width="3.4" stroke-linejoin="round" stroke-linecap="round" /><polyline points="838,0 825,180 808,270 800,370" fill="none" stroke="#dfdede" stroke-width="3.4" stroke-linejoin="round" stroke-linecap="round" /><polyline points="295,592 345,560 345,592" fill="none" stroke="#dfdede" stroke-width="3.4" stroke-linejoin="round" stroke-linecap="round" /><polyline points="640,592 660,570" fill="none" stroke="#dfdede" stroke-width="3.4" stroke-linejoin="round" stroke-linecap="round" /></g><g transform="translate(925,322) scale(0.25)"><polyline points="228,0 230,20 258,40 298,88 385,92 405,125 400,150 430,182 458,196 490,220 490,320 520,430 540,555 560,592" fill="none" stroke="#dfdede" stroke-width="3.4" stroke-linejoin="round" stroke-linecap="round" /><polyline points="458,196 420,252 360,295 295,310 222,286 155,320 128,362 115,515 50,592" fill="none" stroke="#dfdede" stroke-width="3.4" stroke-linejoin="round" stroke-linecap="round" /><polyline points="1065,75 1038,135 1040,260 1028,295 1032,400 1025,470" fill="none" stroke="#dfdede" stroke-width="3.4" stroke-linejoin="round" stroke-linecap="round" /><polyline points="1072,80 1048,140 1052,265 1038,290" fill="none" stroke="#dfdede" stroke-width="3.4" stroke-linejoin="round" stroke-linecap="round" /><polyline points="1025,470 1100,435 1140,425 1170,405 1232,380" fill="none" stroke="#dfdede" stroke-width="3.4" stroke-linejoin="round" stroke-linecap="round" /><polyline points="655,592 705,545 770,535 820,555 850,555 940,500 990,468 1030,470" fill="none" stroke="#dfdede" stroke-width="3.4" stroke-linejoin="round" stroke-linecap="round" /></g><g transform="translate(925,444) scale(0.25)"><polyline points="118,0 112,40 0,160" fill="none" stroke="#dfdede" stroke-width="3.4" stroke-linejoin="round" stroke-linecap="round" /><polyline points="528,0 540,70 570,118 650,122" fill="none" stroke="#dfdede" stroke-width="3.4" stroke-linejoin="round" stroke-linecap="round" /><polyline points="0,480 45,475 100,510 135,545 115,592" fill="none" stroke="#dfdede" stroke-width="3.4" stroke-linejoin="round" stroke-linecap="round" /><polyline points="1040,592 1050,545 1085,510 1140,515 1155,592" fill="none" stroke="#dfdede" stroke-width="3.4" stroke-linejoin="round" stroke-linecap="round" /><polyline points="420,585 455,500 540,410 600,370 640,290" fill="none" stroke="#dfdede" stroke-width="3.4" stroke-linejoin="round" stroke-linecap="round" /></g><g transform="translate(925,444) scale(0.25)"><polyline points="665,592 715,490 805,437 1232,440" fill="none" stroke="#a9abb3" stroke-width="3.2" stroke-linejoin="round" stroke-linecap="round" /><polyline points="760,440 765,460" fill="none" stroke="#a9abb3" stroke-width="3.2" stroke-linejoin="round" stroke-linecap="round" /></g><g transform="translate(674,444) scale(0.125)"><polyline points="320,150 400,60 470,0" fill="none" stroke="#dfdede" stroke-width="6.8" stroke-linejoin="round" stroke-linecap="round" /><polyline points="320,150 420,260 470,310 560,320 590,190 690,140 680,290" fill="none" stroke="#dfdede" stroke-width="6.8" stroke-linejoin="round" stroke-linecap="round" /><polyline points="470,310 520,420 560,560 600,592" fill="none" stroke="#dfdede" stroke-width="6.8" stroke-linejoin="round" stroke-linecap="round" /><polyline points="560,320 700,340 830,430 980,470 1100,510" fill="none" stroke="#dfdede" stroke-width="6.8" stroke-linejoin="round" stroke-linecap="round" /><polyline points="830,430 840,540 800,592" fill="none" stroke="#dfdede" stroke-width="6.8" stroke-linejoin="round" stroke-linecap="round" /><polyline points="400,0 420,30 480,0" fill="none" stroke="#dfdede" stroke-width="6.8" stroke-linejoin="round" stroke-linecap="round" /><polyline points="240,110 280,30 300,0" fill="none" stroke="#dfdede" stroke-width="6.8" stroke-linejoin="round" stroke-linecap="round" /><polyline points="1020,0 1040,120 1090,150 1200,180" fill="none" stroke="#dfdede" stroke-width="6.8" stroke-linejoin="round" stroke-linecap="round" /><polyline points="1200,180 1180,290 1150,400" fill="none" stroke="#dfdede" stroke-width="6.8" stroke-linejoin="round" stroke-linecap="round" /><polyline points="990,340 980,460 1040,500" fill="none" stroke="#dfdede" stroke-width="6.8" stroke-linejoin="round" stroke-linecap="round" /><polyline points="130,430 200,350 180,480 130,540" fill="none" stroke="#dfdede" stroke-width="6.8" stroke-linejoin="round" stroke-linecap="round" /><polyline points="0,300 40,290 50,370" fill="none" stroke="#dfdede" stroke-width="6.8" stroke-linejoin="round" stroke-linecap="round" /></g><g transform="translate(790,518) scale(0.125)"><polyline points="880,592 920,510 1085,365 1160,355 1232,385" fill="none" stroke="#dfdede" stroke-width="6.8" stroke-linejoin="round" stroke-linecap="round" /></g><g transform="translate(366,444) scale(0.125)"><polyline points="180,85 240,115" fill="none" stroke="#dfdede" stroke-width="6.8" stroke-linejoin="round" stroke-linecap="round" /><polyline points="600,0 580,100" fill="none" stroke="#dfdede" stroke-width="6.8" stroke-linejoin="round" stroke-linecap="round" /><polyline points="930,0 955,40" fill="none" stroke="#dfdede" stroke-width="6.8" stroke-linejoin="round" stroke-linecap="round" /><polyline points="440,290 400,360 410,420" fill="none" stroke="#dfdede" stroke-width="6.8" stroke-linejoin="round" stroke-linecap="round" /><polyline points="130,330 100,440 60,470 80,520" fill="none" stroke="#dfdede" stroke-width="6.8" stroke-linejoin="round" stroke-linecap="round" /><polyline points="410,575 440,592" fill="none" stroke="#dfdede" stroke-width="6.8" stroke-linejoin="round" stroke-linecap="round" /></g><g transform="translate(520,444) scale(0.125)"><polyline points="450,0 520,110 560,320 590,420" fill="none" stroke="#dfdede" stroke-width="6.8" stroke-linejoin="round" stroke-linecap="round" /><polyline points="580,440 600,430 610,455 590,460 580,440" fill="none" stroke="#dfdede" stroke-width="6.8" stroke-linejoin="round" stroke-linecap="round" /><polyline points="360,500 365,460 420,400" fill="none" stroke="#dfdede" stroke-width="6.8" stroke-linejoin="round" stroke-linecap="round" /><polyline points="930,300 1000,285 1020,300" fill="none" stroke="#dfdede" stroke-width="6.8" stroke-linejoin="round" stroke-linecap="round" /><polyline points="1110,270 1130,290 1180,240" fill="none" stroke="#dfdede" stroke-width="6.8" stroke-linejoin="round" stroke-linecap="round" /><polyline points="830,420 870,420 880,395" fill="none" stroke="#dfdede" stroke-width="6.8" stroke-linejoin="round" stroke-linecap="round" /></g><g transform="translate(590,318) scale(0.125)"><polyline points="600,0 700,100 820,165 960,195 1010,250 1025,310" fill="none" stroke="#dfdede" stroke-width="6.8" stroke-linejoin="round" stroke-linecap="round" /><polyline points="820,165 800,345 830,540 900,592" fill="none" stroke="#dfdede" stroke-width="6.8" stroke-linejoin="round" stroke-linecap="round" /><polyline points="500,235 560,220 630,155 690,150" fill="none" stroke="#dfdede" stroke-width="6.8" stroke-linejoin="round" stroke-linecap="round" /><polyline points="660,340 800,350" fill="none" stroke="#dfdede" stroke-width="6.8" stroke-linejoin="round" stroke-linecap="round" /><polyline points="660,340 590,400 545,480" fill="none" stroke="#dfdede" stroke-width="6.8" stroke-linejoin="round" stroke-linecap="round" /><polyline points="55,395 110,350 120,295 210,280" fill="none" stroke="#dfdede" stroke-width="6.8" stroke-linejoin="round" stroke-linecap="round" /><polyline points="280,258 310,250 345,275" fill="none" stroke="#dfdede" stroke-width="6.8" stroke-linejoin="round" stroke-linecap="round" /></g><g transform="translate(780,444) scale(0.25)"><polyline points="690,35 580,160 465,155 415,180 300,185 200,240 170,275 165,300 190,300" fill="none" stroke="#dfdede" stroke-width="3.4" stroke-linejoin="round" stroke-linecap="round" /><polyline points="85,0 95,60 180,95 170,135" fill="none" stroke="#dfdede" stroke-width="3.4" stroke-linejoin="round" stroke-linecap="round" /><polyline points="255,20 225,100 215,180 200,240" fill="none" stroke="#dfdede" stroke-width="3.4" stroke-linejoin="round" stroke-linecap="round" /><polyline points="0,215 60,230 95,250" fill="none" stroke="#dfdede" stroke-width="3.4" stroke-linejoin="round" stroke-linecap="round" /><polyline points="485,592 500,555 580,480 625,475 715,545 700,592" fill="none" stroke="#dfdede" stroke-width="3.4" stroke-linejoin="round" stroke-linecap="round" /></g><g transform="translate(366,26) scale(0.25)"><polygon points="140,0 188,0 215,110 238,152 226,182 200,135 172,118" fill="#64cbe0"/><polygon points="350,0 378,0 400,150 385,165 365,130" fill="#64cbe0"/><polygon points="10,118 50,118 60,135 25,145" fill="#64cbe0"/><polygon points="168,212 180,215 205,265 205,308 185,270" fill="#64cbe0"/><polygon points="150,455 172,500 160,520 175,560 170,575 150,560 143,520 155,500" fill="#64cbe0"/><polygon points="1022,122 1040,118 1052,160 1030,150" fill="#64cbe0"/></g><g transform="translate(674,26) scale(0.25)"><polygon points="5,108 30,85 65,122 50,162 42,130" fill="#64cbe0"/><polygon points="183,88 210,105 212,148 188,138" fill="#64cbe0"/><polygon points="428,165 458,200 435,205 460,228 455,278 425,245 435,225 416,208" fill="#64cbe0"/><polygon points="960,0 1000,0 980,15" fill="#64cbe0"/></g><g transform="translate(925,26) scale(0.25)"><polygon points="725,0 778,0 765,75 785,85 770,100 785,110 765,125 780,140 760,175 745,160 730,185 745,195 725,215 705,228 688,262 706,195 727,130 725,60" fill="#64cbe0"/><polygon points="712,355 750,325 758,318 715,385 700,430 705,460 690,490 640,515 625,560 605,592 590,592 612,555 630,505 685,478 690,440 695,400 705,370" fill="#64cbe0"/><polygon points="905,222 935,205 950,215 960,205 968,215 990,210 995,222 965,228 940,248 935,232 915,240" fill="#64cbe0"/></g><g transform="translate(925,26) scale(0.25)"><polyline points="700,235 690,265 700,320 712,350" fill="none" stroke="#64cbe0" stroke-width="4.8" stroke-linejoin="round" stroke-linecap="round" /><polyline points="715,225 745,245 750,300 745,325 720,330 712,355" fill="none" stroke="#64cbe0" stroke-width="4.8" stroke-linejoin="round" stroke-linecap="round" /></g><g transform="translate(366,174) scale(0.25)"><polygon points="172,0 180,0 182,35 205,70 188,92 175,60" fill="#64cbe0"/><polygon points="510,22 535,18 590,82 545,70 512,82" fill="#64cbe0"/><polygon points="0,170 70,225 35,245 10,210" fill="#64cbe0"/><polygon points="205,135 220,140 285,215 297,262 272,292 240,250 210,190 200,160" fill="#64cbe0"/><polygon points="163,195 185,215 190,208 212,262 198,283 165,235" fill="#64cbe0"/><polygon points="315,168 340,245 312,232" fill="#64cbe0"/><polygon points="295,358 318,365 345,430 325,455 292,440 285,395" fill="#64cbe0"/><polygon points="38,442 55,450 90,525 60,490" fill="#64cbe0"/><polygon points="425,495 440,495 455,535 435,540 430,560 425,520" fill="#64cbe0"/><polygon points="370,515 385,515 375,555 360,585 345,565 350,540" fill="#64cbe0"/><polygon points="270,565 285,570 295,592 275,592" fill="#64cbe0"/></g><g transform="translate(366,174) scale(0.25)"><polyline points="792,165 805,185 815,190 825,210 838,220" fill="none" stroke="#64cbe0" stroke-width="2.8" stroke-linejoin="round" stroke-linecap="round" /><polyline points="730,318 735,345" fill="none" stroke="#64cbe0" stroke-width="2.8" stroke-linejoin="round" stroke-linecap="round" /><polyline points="742,362 760,380 795,378 810,390" fill="none" stroke="#64cbe0" stroke-width="2.8" stroke-linejoin="round" stroke-linecap="round" /><polyline points="795,428 805,455 820,470 818,490 835,500 842,545 850,592" fill="none" stroke="#64cbe0" stroke-width="2.8" stroke-linejoin="round" stroke-linecap="round" /></g><g transform="translate(674,174) scale(0.25)"><polygon points="1232,135 1190,155 1140,200 1095,190 1040,200 975,235 1095,205 1140,218 1195,170 1232,150" fill="#64cbe0"/><polygon points="975,235 1030,225 985,250 965,262" fill="#64cbe0"/><polygon points="925,310 945,308 950,332 935,340" fill="#64cbe0"/><polygon points="915,455 905,480 860,530 830,565 820,592 805,592 815,560 850,515 895,465" fill="#64cbe0"/></g><g transform="translate(674,174) scale(0.25)"><polyline points="970,245 955,275 935,305 940,335 915,348 910,380 920,400 915,455" fill="none" stroke="#64cbe0" stroke-width="4.8" stroke-linejoin="round" stroke-linecap="round" /><polyline points="925,345 922,400 912,440" fill="none" stroke="#64cbe0" stroke-width="4.8" stroke-linejoin="round" stroke-linecap="round" /></g><g transform="translate(674,174) scale(0.25)"><polygon points="8,350 105,355 35,362 20,382 12,362" fill="#64cbe0"/></g><g transform="translate(925,174) scale(0.25)"><polygon points="590,0 608,0 588,38 500,72 400,82 388,70 400,55 500,45 575,22" fill="#64cbe0"/><polygon points="375,128 270,125 235,135 185,155 140,200 85,190 0,225 0,245 85,208 140,218 190,172 235,152 270,142 375,142 400,118 412,85 400,80 392,112" fill="#64cbe0"/></g><g transform="translate(925,174) scale(0.25)"><polyline points="390,72 382,85 385,110 372,130" fill="none" stroke="#64cbe0" stroke-width="3.2" stroke-linejoin="round" stroke-linecap="round" /></g><g transform="translate(366,322) scale(0.25)"><polygon points="275,0 300,0 308,35 290,45" fill="#64cbe0"/><polygon points="635,172 648,168 665,228 658,240" fill="#64cbe0"/><polygon points="858,185 868,175 888,210 892,248 870,222" fill="#64cbe0"/><polygon points="938,322 970,320 988,368 955,375" fill="#64cbe0"/><polygon points="420,395 438,405 440,465 460,478 440,492 410,450" fill="#64cbe0"/><polygon points="630,410 662,478 635,502 608,460" fill="#64cbe0"/><polygon points="222,435 250,475 238,500 213,452" fill="#64cbe0"/><polygon points="888,70 892,70 892,98 888,98" fill="#64cbe0"/></g><g transform="translate(366,322) scale(0.25)"><polyline points="335,500 338,545 330,575 310,592" fill="none" stroke="#64cbe0" stroke-width="4.0" stroke-linejoin="round" stroke-linecap="round" /></g><g transform="translate(630,400) scale(0.125)"><polygon points="220,-60 305,-60 330,0 350,80 345,160 400,290 410,400 420,480 400,500 350,400 310,300 280,220 255,140 265,60 260,0" fill="#64cbe0"/></g><g transform="translate(630,400) scale(0.125)"><polygon points="305,40 330,80 325,120 300,80" fill="#faf9f9"/><polygon points="285,200 310,250 320,290 295,250" fill="#faf9f9"/><polygon points="365,270 385,310 390,340 370,310" fill="#faf9f9"/></g><g transform="translate(630,400) scale(0.125)"><polyline points="470,0 440,55" fill="none" stroke="#64cbe0" stroke-width="8.8" stroke-linejoin="round" stroke-linecap="round" /><polyline points="478,-60 495,0 520,50 580,130 630,200 660,215 665,330 680,420 670,465 640,480 640,510 665,560 680,592" fill="none" stroke="#64cbe0" stroke-width="8.8" stroke-linejoin="round" stroke-linecap="round" /></g><g transform="translate(674,322) scale(0.25)"><polygon points="812,0 825,0 822,90 820,180 808,200 816,232 815,252 806.5,269.5 796.5,287 793,302 804,372 796.5,379.5 689,424.5 684,452 680,530 650,545 630,592 605,592 625,555 655,520 659,512 663,422 694,408 791.5,369.5 785,302 789,289.5 804,267 797,232 790,200 805,140 815,60" fill="#64cbe0"/></g><g transform="translate(674,322) scale(0.25)"><polyline points="50,85 55,150 80,260 85,300" fill="none" stroke="#64cbe0" stroke-width="4.0" stroke-linejoin="round" stroke-linecap="round" /><polyline points="80,290 55,310 42,342" fill="none" stroke="#64cbe0" stroke-width="4.0" stroke-linejoin="round" stroke-linecap="round" /></g><g transform="translate(925,322) scale(0.25)"><polyline points="650,592 655,570 740,518 790,530 805,562 840,565 890,535 925,495 1005,470 1028,475 1035,510 1070,570 1105,592" fill="none" stroke="#64cbe0" stroke-width="4.4" stroke-linejoin="round" stroke-linecap="round" /></g><g transform="translate(925,444) scale(0.25)"><polyline points="1232,145 1215,150 1185,192 1150,195 1135,190 1135,128 1075,85 1040,30 1030,0" fill="none" stroke="#64cbe0" stroke-width="4.4" stroke-linejoin="round" stroke-linecap="round" /><polyline points="960,0 930,8 885,48 840,78 805,72 795,45 740,32 660,80 652,100 660,180 645,240 650,280 635,290 620,375 580,395 550,438 530,438 490,492 462,500 455,545 430,585" fill="none" stroke="#64cbe0" stroke-width="4.4" stroke-linejoin="round" stroke-linecap="round" /></g><g transform="translate(925,444) scale(0.25)"><polyline points="660,180 645,240 650,280" fill="none" stroke="#64cbe0" stroke-width="8.8" stroke-linejoin="round" stroke-linecap="round" /></g><g transform="translate(925,444) scale(0.25)"><polygon points="502,148 540,140 547,192 508,178" fill="#64cbe0"/><polygon points="990,230 1005,208 1022,238 998,252" fill="#64cbe0"/><polygon points="1052,380 1072,348 1085,378 1062,410" fill="#64cbe0"/></g><g transform="translate(480,26) scale(0.125)"><polygon points="185,-10 258,-10 215,245 215,330 290,600 210,600 205,500 135,245" fill="#64cbe0"/></g><g transform="translate(480,26) scale(0.125)"><polygon points="192,300 200,320 202,365 194,340" fill="#faf9f9"/></g><g transform="translate(480,100) scale(0.125)"><polygon points="210,-5 260,100 290,250 370,370 385,480 440,520 560,570 590,600 625,600 540,460 480,290 400,170 310,80 300,-5" fill="#64cbe0"/></g><g transform="translate(480,100) scale(0.125)"><polygon points="320,110 380,160 440,240 400,230 340,170" fill="#faf9f9"/><polygon points="330,200 400,260 450,330 400,310 350,260" fill="#faf9f9"/><polygon points="400,330 470,400 520,470 470,440 420,390" fill="#faf9f9"/><polygon points="470,280 500,340 540,440 500,390" fill="#faf9f9"/><polygon points="400,420 440,470 500,510 450,500 405,460" fill="#faf9f9"/><polygon points="270,60 300,110 290,160 272,110" fill="#faf9f9"/></g><g transform="translate(540,170) scale(0.125)"><polygon points="40,-5 130,-5 160,40 200,70 275,95 290,100 320,130 350,140 345,165 315,140 280,115 240,100 190,95 130,65 80,30" fill="#64cbe0"/><polygon points="380,115 410,130 460,175 485,230 500,330 515,420 520,470 500,440 470,390 420,320 455,290 468,240 440,190 400,150" fill="#64cbe0"/><polygon points="490,455 510,470 525,540 530,600 480,600 505,560 485,490" fill="#64cbe0"/></g><g transform="translate(540,170) scale(0.125)"><polyline points="195,365 205,390 235,410" fill="none" stroke="#64cbe0" stroke-width="5.6" stroke-linejoin="round" stroke-linecap="round" /><polyline points="248,435 258,460 285,475" fill="none" stroke="#64cbe0" stroke-width="5.6" stroke-linejoin="round" stroke-linecap="round" /></g><g transform="translate(560,244) scale(0.125)"><polygon points="320,-5 315,240 420,400 500,490 560,600 645,600 590,480 520,300 450,150 370,70 372,-5" fill="#64cbe0"/></g><g transform="translate(560,244) scale(0.125)"><polygon points="395,155 430,170 435,200 405,185" fill="#faf9f9"/><polygon points="455,230 480,245 490,265 460,250" fill="#faf9f9"/><polygon points="370,205 395,240 400,270 375,245" fill="#faf9f9"/><polygon points="335,195 345,200 348,225 338,218" fill="#faf9f9"/><polygon points="400,380 430,410 455,440 420,420" fill="#faf9f9"/><polygon points="320,250 400,320 420,395 330,270" fill="#faf9f9"/><polygon points="470,310 490,330 495,355 475,335" fill="#faf9f9"/></g><g transform="translate(560,244) scale(0.125)"><polygon points="930,145 1125,155 975,168 955,205 940,170" fill="#64cbe0"/></g><g transform="translate(590,318) scale(0.125)"><polygon points="340,-5 370,150 380,300 400,380 460,460 520,560 540,600 625,600 560,560 500,500 440,420 410,330 420,290 450,200 465,100 450,-5" fill="#64cbe0"/><polygon points="480,0 525,0 520,12 485,10" fill="#64cbe0"/></g><g transform="translate(590,318) scale(0.125)"><polygon points="380,0 440,0 430,10 385,12" fill="#faf9f9"/><polygon points="425,30 450,40 448,60 428,55" fill="#faf9f9"/><polygon points="350,110 385,160 375,200 352,150" fill="#faf9f9"/><polygon points="375,255 400,250 402,285 380,290" fill="#faf9f9"/></g><g transform="translate(590,318) scale(0.125)"><polyline points="530,-5 575,95 680,120 775,215 790,340 830,540 835,600" fill="none" stroke="#64cbe0" stroke-width="12.8" stroke-linejoin="round" stroke-linecap="round" /></g><polyline points="714.3,455 709.5,459 708.7,462.3 712.7,469.6 714.3,471.2" fill="none" stroke="#64cbe0" stroke-width="1.6" stroke-linejoin="round" stroke-linecap="round" /><polyline points="708.7,474.5 711.9,481.8 716.8,493.1 724.9,503 727,507" fill="none" stroke="#64cbe0" stroke-width="2.0" stroke-linejoin="round" stroke-linecap="round" /><polyline points="702.2,477.7 705.4,482.6 710.3,487.4 711.9,495.5 716.8,503 719,508" fill="none" stroke="#64cbe0" stroke-width="3.6" stroke-linejoin="round" stroke-linecap="round" /><polyline points="695.7,474.5 698.1,481 703.8,485.8 707,490.7 707.9,503 708,508" fill="none" stroke="#64cbe0" stroke-width="2.0" stroke-linejoin="round" stroke-linecap="round" /><polyline points="697.3,470.4 696.5,474.5" fill="none" stroke="#64cbe0" stroke-width="1.5" stroke-linejoin="round" stroke-linecap="round" /><polyline points="703.8,473.7 708.7,476.1" fill="none" stroke="#64cbe0" stroke-width="1.5" stroke-linejoin="round" stroke-linecap="round" /><polyline points="678.7,474.5 684.3,478.5 692.4,479.3 695.7,477.7" fill="none" stroke="#64cbe0" stroke-width="1.0" stroke-linejoin="round" stroke-linecap="round" /><polyline points="450,447 450.3,461 440.5,471" fill="none" stroke="#64cbe0" stroke-width="1.1" stroke-linejoin="round" stroke-linecap="round" /><g transform="translate(630,400) scale(0.125)"><polyline points="178,-60 215,0 240,50 240,160 275,260 285,340 295,480 310,530" fill="none" stroke="#facc84" stroke-width="19.6" stroke-linejoin="round" stroke-linecap="round" /></g><g transform="translate(520,444) scale(0.125)"><polyline points="1175,0 1180,170" fill="none" stroke="#facc84" stroke-width="19.6" stroke-linejoin="round" stroke-linecap="round" /></g><g transform="translate(480,26) scale(0.125)"><polyline points="168,-10 90,245 175,485 175,600" fill="none" stroke="#facc84" stroke-width="19.6" stroke-linejoin="round" stroke-linecap="round" /></g><g transform="translate(480,100) scale(0.125)"><polyline points="175,-10 175,20 255,175 260,235 300,340 295,385 350,480 355,520 395,555 470,548 560,592 580,604" fill="none" stroke="#facc84" stroke-width="19.6" stroke-linejoin="round" stroke-linecap="round" /></g><g transform="translate(540,170) scale(0.125)"><polyline points="20,0 70,40 130,70 200,130 260,140 380,270 420,390 445,480 450,600" fill="none" stroke="#facc84" stroke-width="19.6" stroke-linejoin="round" stroke-linecap="round" /></g><g transform="translate(560,244) scale(0.125)"><polyline points="295,-10 305,120 305,265 400,430 470,490 540,600" fill="none" stroke="#facc84" stroke-width="19.6" stroke-linejoin="round" stroke-linecap="round" /></g><g transform="translate(590,318) scale(0.125)"><polyline points="300,-5 335,80 365,270 380,380 460,500 500,600" fill="none" stroke="#facc84" stroke-width="19.6" stroke-linejoin="round" stroke-linecap="round" /></g><g transform="translate(630,400) scale(0.125)"><polyline points="290,-60 275,0 285,120 340,250 370,330 390,395 325,398 310,470 360,530 340,600" fill="none" stroke="#8e94a3" stroke-width="10.8" stroke-linejoin="round" stroke-linecap="round" /></g><g transform="translate(480,26) scale(0.125)"><polyline points="198,-10 180,245 170,300 225,520 230,600" fill="none" stroke="#8e94a3" stroke-width="10.8" stroke-linejoin="round" stroke-linecap="round" /></g><g transform="translate(480,100) scale(0.125)"><polyline points="222,-10 230,30 300,140 310,260 385,360 395,480 440,515 560,555 600,592 610,604" fill="none" stroke="#8e94a3" stroke-width="10.8" stroke-linejoin="round" stroke-linecap="round" /></g><g transform="translate(540,170) scale(0.125)"><polyline points="85,0 190,90 265,100 320,130 375,125 445,170 470,215 475,270 445,320 500,440 515,500 520,600" fill="none" stroke="#8e94a3" stroke-width="10.8" stroke-linejoin="round" stroke-linecap="round" /></g><g transform="translate(560,244) scale(0.125)"><polyline points="340,70 350,150 400,200 470,360 540,510 600,580 610,600" fill="none" stroke="#8e94a3" stroke-width="10.8" stroke-linejoin="round" stroke-linecap="round" /></g><g transform="translate(590,318) scale(0.125)"><polyline points="370,-5 420,120 420,260 390,310 420,400 490,500 540,580 600,570 612,600" fill="none" stroke="#8e94a3" stroke-width="10.8" stroke-linejoin="round" stroke-linecap="round" /></g><polyline points="669.5,451.5 671.25,462.75 676.25,471.5 680,490" fill="none" stroke="#8e94a3" stroke-width="1.1" stroke-linejoin="round" stroke-linecap="round" /><g transform="translate(925,26) scale(0.25)"><polyline points="695,0 688,20 718,130 700,200 672,265 690,300 695,350 685,400 640,465 600,560 578,592" fill="none" stroke="#f7b942" stroke-width="12.0" stroke-linejoin="round" stroke-linecap="round" /></g><g transform="translate(674,174) scale(0.25)"><polyline points="1232,92 1200,98 1105,152 1010,188 905,285 872,345 868,405 790,592" fill="none" stroke="#f7b942" stroke-width="12.0" stroke-linejoin="round" stroke-linecap="round" /></g><g transform="translate(925,174) scale(0.25)"><polyline points="578,0 565,18 505,22 395,50 325,80 200,95 100,155 0,195" fill="none" stroke="#f7b942" stroke-width="12.0" stroke-linejoin="round" stroke-linecap="round" /></g><g transform="translate(630,400) scale(0.125)"><polyline points="318,-60 335,0 360,70 355,150 420,300 430,400 425,515" fill="none" stroke="#f7b942" stroke-width="24.0" stroke-linejoin="round" stroke-linecap="round" /><polyline points="215,592 280,545 420,520 480,520 690,580 800,560 900,570 960,592" fill="none" stroke="#f7b942" stroke-width="24.0" stroke-linejoin="round" stroke-linecap="round" /></g><g transform="translate(674,322) scale(0.25)"><polyline points="795,0 715,218 610,378 540,580 535,592" fill="none" stroke="#f7b942" stroke-width="12.0" stroke-linejoin="round" stroke-linecap="round" /></g><g transform="translate(674,444) scale(0.125)"><polyline points="60,170 130,180 330,225 450,208 545,222 690,290 860,300 930,315 985,345 1010,360" fill="none" stroke="#f7b942" stroke-width="24.0" stroke-linejoin="round" stroke-linecap="round" /><polyline points="1150,0 1080,150 1000,330 1030,420 1090,520 1140,592" fill="none" stroke="#f7b942" stroke-width="24.0" stroke-linejoin="round" stroke-linecap="round" /><polyline points="65,170 70,0" fill="none" stroke="#f7b942" stroke-width="24.0" stroke-linejoin="round" stroke-linecap="round" /></g><g transform="translate(790,518) scale(0.125)"><polyline points="205,-10 290,95 300,220 360,395 400,450 560,585 580,600" fill="none" stroke="#f7b942" stroke-width="24.0" stroke-linejoin="round" stroke-linecap="round" /></g><g transform="translate(366,444) scale(0.125)"><polyline points="-10,320 60,335 180,285 415,268 540,140 625,95 740,75 830,100 965,168 1200,172 1240,182" fill="none" stroke="#f7b942" stroke-width="24.0" stroke-linejoin="round" stroke-linecap="round" /></g><g transform="translate(520,444) scale(0.125)"><polyline points="-10,178 0,180 190,255 360,355 480,395 670,400 820,405 930,335 1015,312 1170,185 1240,170" fill="none" stroke="#f7b942" stroke-width="24.0" stroke-linejoin="round" stroke-linecap="round" /></g><g transform="translate(480,26) scale(0.125)"><polyline points="287,-10 215,245 225,390 340,545 345,600" fill="none" stroke="#f7b942" stroke-width="24.0" stroke-linejoin="round" stroke-linecap="round" /></g><g transform="translate(480,100) scale(0.125)"><polyline points="340,-10 350,95 575,325 580,400 600,480 645,600" fill="none" stroke="#f7b942" stroke-width="24.0" stroke-linejoin="round" stroke-linecap="round" /></g><g transform="translate(540,170) scale(0.125)"><polyline points="150,-10 165,35 230,75 385,95 475,160 510,240 530,420 545,540 535,600" fill="none" stroke="#f7b942" stroke-width="24.0" stroke-linejoin="round" stroke-linecap="round" /></g><g transform="translate(560,244) scale(0.125)"><polyline points="375,60 460,140 530,300 610,490 700,600" fill="none" stroke="#f7b942" stroke-width="24.0" stroke-linejoin="round" stroke-linecap="round" /></g><g transform="translate(590,318) scale(0.125)"><polyline points="455,-5 480,50 490,160 440,320 435,385 500,480 600,550 640,600" fill="none" stroke="#f7b942" stroke-width="24.0" stroke-linejoin="round" stroke-linecap="round" /></g><rect x="547.20" y="150.50" width="10.8" height="7.4" fill="#cf1016"/><text x="552.6" y="156.22" font-size="5.6" fill="#fff" text-anchor="middle">21</text><rect x="601.00" y="244.30" width="10.8" height="7.4" fill="#cf1016"/><text x="606.4" y="250.02" font-size="5.6" fill="#fff" text-anchor="middle">21</text><rect x="678.10" y="440.30" width="10.8" height="7.4" fill="#cf1016"/><text x="683.5" y="446.02" font-size="5.6" fill="#fff" text-anchor="middle">21</text><rect x="799.60" y="466.50" width="10.8" height="7.4" fill="#cf1016"/><text x="805" y="472.22" font-size="5.6" fill="#fff" text-anchor="middle">4</text><rect x="444.50" y="450.80" width="11" height="7.6" fill="#0c7c43"/><text x="450" y="456.62" font-size="5.6" fill="#fff" text-anchor="middle">E4</text><rect x="603.80" y="491.00" width="11" height="7.6" fill="#0c7c43"/><text x="609.3" y="496.82" font-size="5.6" fill="#fff" text-anchor="middle">E4</text><circle cx="677.2" cy="464" r="1.5" fill="#fff" stroke="#555" stroke-width="0.7"/><text transform="translate(678,472.6) scale(1,1.08)" x="0" y="0" font-size="8.4" fill="#5c5c5c" stroke="#fbfafa" stroke-width="1.0" stroke-linejoin="round" paint-order="stroke" text-anchor="middle" style="text-rendering:geometricPrecision">Tornio</text><circle cx="824.3" cy="558" r="1.5" fill="#fff" stroke="#555" stroke-width="0.7"/><text transform="translate(824.5,567.5) scale(1,1.08)" x="0" y="0" font-size="8.2" fill="#5c5c5c" stroke="#fbfafa" stroke-width="1.0" stroke-linejoin="round" paint-order="stroke" text-anchor="middle" style="text-rendering:geometricPrecision">Kemi</text><text transform="translate(911,251.2) scale(1,1.08)" x="0" y="0" font-size="6.2" fill="#585858" stroke="#fbfafa" stroke-width="1.0" stroke-linejoin="round" paint-order="stroke" text-anchor="middle" style="text-rendering:geometricPrecision">Tervola</text><text transform="translate(817.2,496.8) scale(1,1.08)" x="0" y="0" font-size="6.3" fill="#4e4e4e" stroke="#fbfafa" stroke-width="1.1" stroke-linejoin="round" paint-order="stroke" text-anchor="middle" style="text-rendering:geometricPrecision">Keminmaa</text></svg><div class="abs" style="left:6.3px;top:7.0px;width:155px;height:23.5px;background:#fff;border-radius:2.5px;box-shadow:0 0 4px 1px rgba(0,0,0,0.12)"></div><svg class="abs" style="left:13.0px;top:15.0px" width="9" height="9" viewBox="0 0 9 9"><circle cx="3.4" cy="3.4" r="2.5" fill="none" stroke="#5c5c5c" stroke-width="1.1"/><path d="M5.3 5.3 L8 8" stroke="#5c5c5c" stroke-width="1.3" stroke-linecap="round"/></svg><div class="abs" style="left:29.0px;top:13.5px;font-size:9.5px;color:#757575;line-height:11px;transform:scaleY(1.09)">Search</div><div class="abs" style="left:813.3px;top:8.0px;width:50.8px;height:17px;background:#1c1f24;border-radius:2px"></div><div class="abs" style="left:817.6px;top:11.5px;font-size:7.8px;font-weight:bold;color:#d6d6d6;line-height:10px;transform:scaleY(1.09)">Zoom: 8.59</div><div class="abs" style="left:845.3px;top:32.0px;width:18.8px;height:55.5px;background:#1c1f24;border-radius:2.5px"></div><div class="abs" style="left:845.3px;top:50.2px;width:18.8px;height:1px;background:#8e9094"></div><div class="abs" style="left:845.3px;top:69.0px;width:18.8px;height:1px;background:#8e9094"></div><div class="abs" style="left:851.4px;top:40.0px;width:6.8px;height:1.6px;background:#e0e0e0"></div><div class="abs" style="left:854.0px;top:37.4px;width:1.6px;height:6.8px;background:#e0e0e0"></div><div class="abs" style="left:851.4px;top:59.2px;width:6.8px;height:1.6px;background:#e0e0e0"></div><svg class="abs" style="left:851.8px;top:73.3px" width="6" height="11" viewBox="0 0 6 11"><path d="M3 0.5 L5.2 5 H0.8 Z" fill="#d0d0d0"/><path d="M3 10.5 L5.2 6 H0.8 Z" fill="#77797d"/></svg><div class="abs" style="left:309.2px;top:276.8px;width:122.6px;height:27.4px;background:#fff;box-shadow:0 0 3px rgba(0,0,0,0.2)"></div><div class="abs" style="left:309.2px;top:276.8px;width:122.6px;height:13.2px;background:#2e3036"></div><div class="abs" style="left:312.0px;top:290.0px;width:119.8px;height:14.2px;background:#1c1f24"></div><div class="abs" style="left:312.4px;top:278.4px;font-size:7.3px;font-weight:bold;color:#f0f0f0;line-height:10px;letter-spacing:-0.1px;transform:scaleY(1.09)">LayerTransport</div><svg class="abs" style="left:315.8px;top:293.3px" width="7" height="6" viewBox="0 0 7 6"><path d="M0.5 4.5 L2.3 2 L3.8 3.6 L6.4 0.8" fill="none" stroke="#b0b0b0" stroke-width="0.8"/></svg><div class="abs" style="left:324.8px;top:292.4px;font-size:7.95px;color:#b4b4b4;line-height:10px;transform:scaleY(1.09)">TSP_RoadArterial_Outer-grey</div><div class="abs" style="left:417.2px;top:276.8px;width:14.6px;height:12.6px;background:#2e3036;border:1px solid #8b8d91;border-radius:2px"></div><div class="abs" style="left:421.8px;top:278.0px;font-size:8px;font-weight:bold;color:#fff;line-height:10px;transform:scaleY(1.09)">×</div><div class="abs" style="left:364.6px;top:304.2px;border-left:5.6px solid transparent;border-right:5.6px solid transparent;border-top:6.5px solid #1c1f24"></div><div class="abs" style="left:848.5px;top:545.0px;width:15px;height:15px;border-radius:8px;background:#fff"></div><div class="abs" style="left:851.4px;top:547.9px;width:9.2px;height:9.2px;border-radius:5px;background:#000"></div><div class="abs" style="left:855.2px;top:551.5px;width:1.5px;height:3.6px;background:#fff"></div><div class="abs" style="left:855.2px;top:549.3px;width:1.6px;height:1.6px;border-radius:1px;background:#fff"></div></div>
</div>
</body></html>
